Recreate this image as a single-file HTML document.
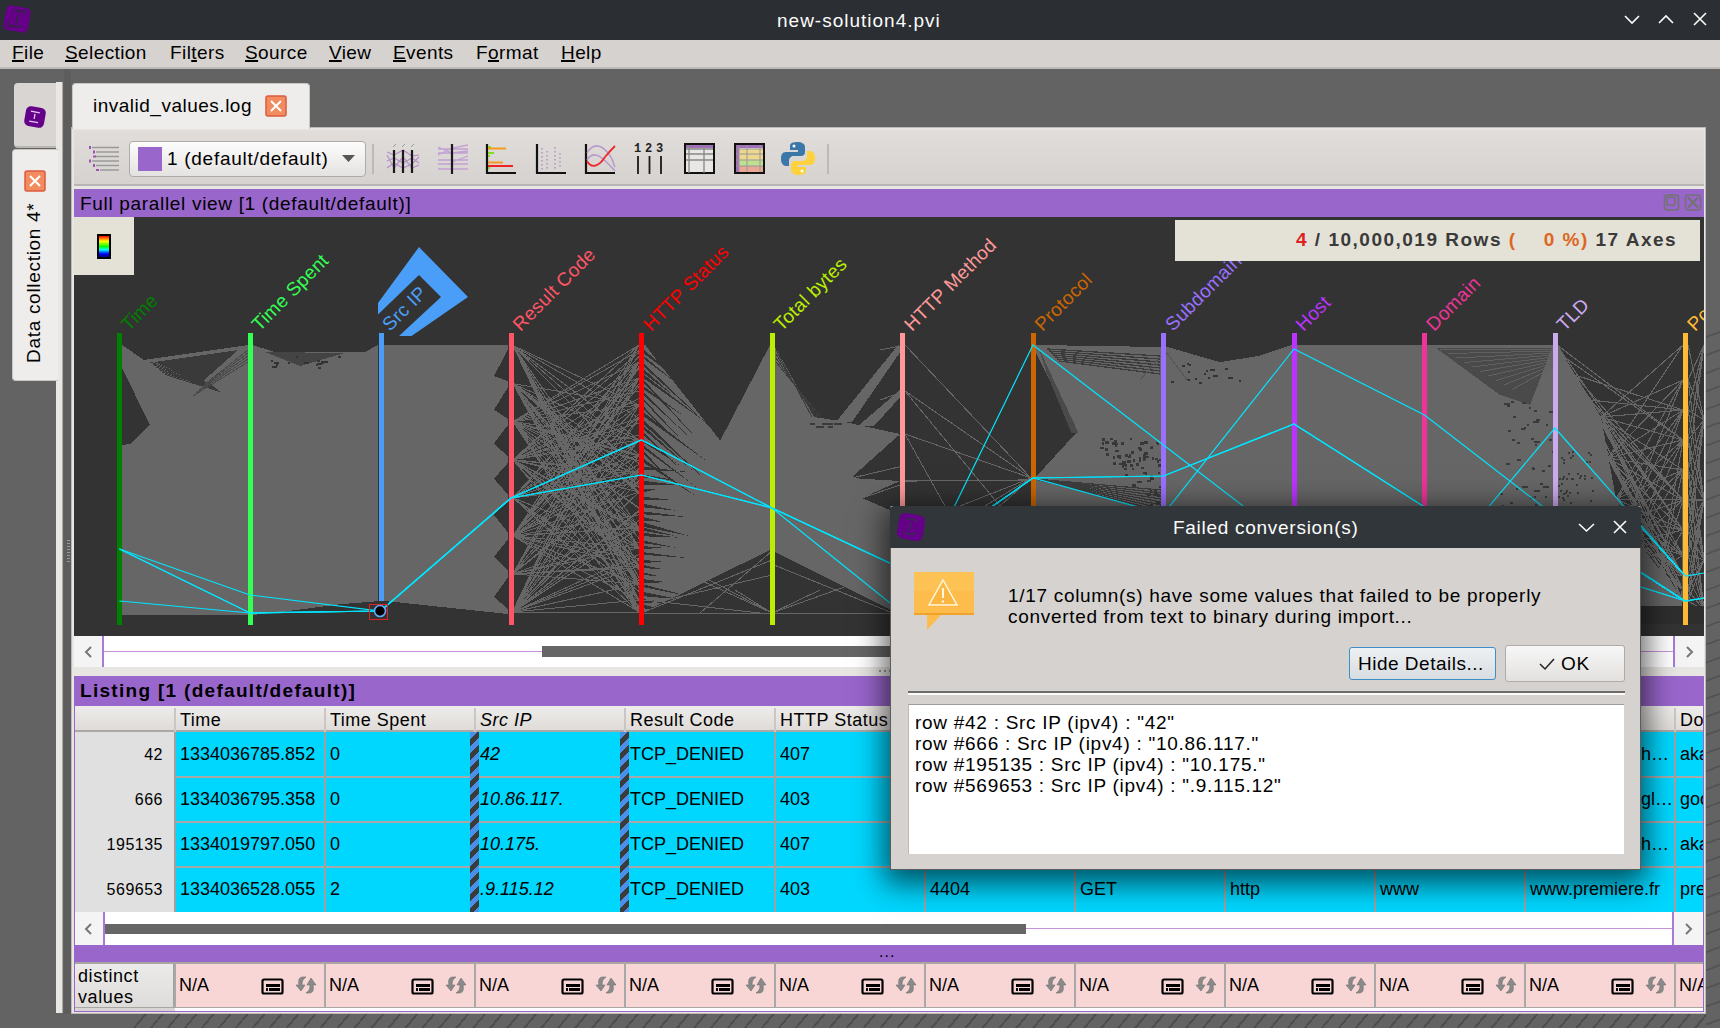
<!DOCTYPE html>
<html><head><meta charset="utf-8">
<style>
*{margin:0;padding:0;box-sizing:border-box}
html,body{width:1720px;height:1028px;overflow:hidden;background:#636363;font-family:"Liberation Sans",sans-serif;color:#000}
.a{position:absolute}
.t{position:absolute;white-space:pre;line-height:1}
#title{left:0;top:0;width:1720px;height:40px;background:#2b2e32;color:#fcfcfc;font-size:19px}
#menu{left:0;top:40px;width:1720px;height:29px;background:#d6d2cf;border-bottom:2px solid #bebab7;font-size:19px;letter-spacing:0.4px}
#menu span{position:absolute;top:2px}
u{text-decoration:underline;text-decoration-thickness:2px;text-underline-offset:1px}
.purple{background:#9966cc}
.hatch{background-color:#636363;background-image:repeating-linear-gradient(125deg,transparent 0 12px,#4a4a4a 12px 13.5px),repeating-linear-gradient(55deg,transparent 0 17px,#565656 17px 18.5px)}
.sep{position:absolute;width:2px;background:#bdb9b6}
</style></head><body>
<!-- bottom & right hatch -->
<div class="a" style="left:130px;top:1014px;width:1590px;height:14px;background-color:#636363;background-image:repeating-linear-gradient(130deg,transparent 0 11px,#4e4e4e 11px 13px)"></div>
<div class="a" style="left:1706px;top:320px;width:14px;height:708px;background-color:#636363;background-image:repeating-linear-gradient(160deg,transparent 0 15px,#545454 15px 17px)"></div>

<!-- title bar -->
<div id="title" class="a">
  <svg class="a" style="left:0;top:0" width="40" height="40" viewBox="0 0 40 40">
    <g transform="rotate(10 17 19)"><rect x="4.5" y="6.5" width="25" height="25" rx="5" fill="#660088"/></g>
    <path d="M14.5 10.5 L24.5 11.8 L25 14 M17.5 15.5 L16.3 22.5 M8.5 21.5 L8 25.5 L20.5 26.8" stroke="#2a2a3a" stroke-width="1.6" fill="none" stroke-linecap="round"/>
  </svg>
  <div class="t" style="left:777px;top:11px;letter-spacing:1px">new-solution4.pvi</div>
  <svg class="a" style="left:1620px;top:10px" width="100" height="20" viewBox="0 0 100 20">
    <path d="M5 6 L12 13 L19 6" stroke="#fcfcfc" stroke-width="1.6" fill="none"/>
    <path d="M39 13 L46 6 L53 13" stroke="#fcfcfc" stroke-width="1.6" fill="none"/>
    <path d="M74 3 L86 15 M86 3 L74 15" stroke="#fcfcfc" stroke-width="1.6" fill="none"/>
  </svg>
</div>

<!-- menu -->
<div id="menu" class="a">
  <span style="left:12px"><u>F</u>ile</span>
  <span style="left:65px"><u>S</u>election</span>
  <span style="left:170px">Fil<u>t</u>ers</span>
  <span style="left:245px"><u>S</u>ource</span>
  <span style="left:329px"><u>V</u>iew</span>
  <span style="left:393px"><u>E</u>vents</span>
  <span style="left:476px">F<u>o</u>rmat</span>
  <span style="left:561px"><u>H</u>elp</span>
</div>

<!-- left dock -->
<div class="a" style="left:56px;top:82px;width:7px;height:931px;background:#e9e7e4;border-right:1px solid #a9a6a3"></div>
<div class="a" style="left:64px;top:69px;width:7px;height:945px;background:#5d5d5d"></div>
<div class="a" style="left:14px;top:83px;width:42px;height:65px;background:#d8d5d2;border-radius:4px 0 0 4px;border-bottom:2px solid #b9b6b3"></div>
<svg class="a" style="left:21px;top:103px" width="28" height="28" viewBox="0 0 28 28">
  <g transform="rotate(10 14 14)"><rect x="4" y="4" width="20" height="20" rx="5" fill="#650088"/>
  <path d="M9 9 h9 M13.5 11 v5 M9 19 h9" stroke="#e8c8ff" stroke-width="1.3" fill="none"/></g>
</svg>
<div class="a" style="left:12px;top:149px;width:46px;height:232px;background:#efedeb;border-radius:4px 0 0 4px;border:1px solid #c9c6c3;border-right:none"></div>
<svg class="a" style="left:24px;top:170px" width="22" height="22" viewBox="0 0 22 22">
  <rect x="1" y="1" width="20" height="20" rx="2" fill="#f28c60" stroke="#db5a3c" stroke-width="1.5"/>
  <path d="M6 6 L16 16 M16 6 L6 16" stroke="#fff" stroke-width="2"/>
</svg>
<div class="t" style="left:24px;top:363px;font-size:19px;letter-spacing:0.7px;transform:rotate(-90deg);transform-origin:0 0">Data collection 4*</div>
<div class="a" style="left:67px;top:540px;width:3px;height:24px;background:repeating-linear-gradient(#9a9a9a 0 1px,transparent 1px 3px)"></div>

<!-- main tab -->
<div class="a" style="left:71px;top:127px;width:1635px;height:887px;background:#e8e6e3;border:1px solid #bcb9b6"></div>
<div class="a" style="left:72px;top:83px;width:238px;height:46px;background:#efedeb;border-radius:4px 4px 0 0;border:1px solid #c9c6c3;border-bottom:none"></div>
<div class="t" style="left:93px;top:96px;font-size:19px;letter-spacing:0.5px">invalid_values.log</div>
<svg class="a" style="left:265px;top:95px" width="22" height="22" viewBox="0 0 22 22">
  <rect x="1" y="1" width="20" height="20" rx="2" fill="#f28c60" stroke="#db5a3c" stroke-width="1.5"/>
  <path d="M6 6 L16 16 M16 6 L6 16" stroke="#fff" stroke-width="2"/>
</svg>

<!-- toolbar -->
<div class="a" style="left:74px;top:130px;width:1630px;height:56px;background:linear-gradient(#e0ddda,#d6d2cf);border-bottom:2px solid #b8b5b2"></div>
<!-- list icon -->
<svg class="a" style="left:88px;top:145px" width="32" height="29" viewBox="0 0 32 29">
  <g stroke="#9a9a9a" stroke-width="1.6">
    <path d="M4 2.5 H31 M8 7 H31 M8 11.5 H31 M4 16 H31 M8 20.5 H31 M12 25 H31"/>
  </g>
  <g fill="#a050b0">
    <rect x="1" y="1" width="2" height="3"/><rect x="5" y="5.5" width="2" height="3"/><rect x="5" y="10.5" width="3" height="2"/>
    <rect x="1" y="14.5" width="2" height="3"/><rect x="5" y="19" width="2" height="3"/><rect x="8" y="24" width="3" height="2"/>
  </g>
</svg>
<!-- combo -->
<div class="a" style="left:129px;top:141px;width:237px;height:36px;border:1px solid #aeaba8;border-radius:4px;background:linear-gradient(#fdfdfd,#e4e2e0)"></div>
<div class="a" style="left:138px;top:147px;width:24px;height:24px;background:#9966cc"></div>
<div class="t" style="left:167px;top:149px;font-size:19px;letter-spacing:0.72px">1 (default/default)</div>
<svg class="a" style="left:341px;top:154px" width="15" height="10"><path d="M1 1 H14 L7.5 8 Z" fill="#555"/></svg>
<div class="sep" style="left:372px;top:144px;height:30px"></div>
<!-- icon 1 parallel -->
<svg class="a" style="left:386px;top:143px" width="34" height="32" viewBox="0 0 34 32">
  <g stroke="#b48ac8" stroke-width="1.2" fill="none" opacity="0.9">
    <path d="M1 9 L8 12 L17 7 L26 13 L33 12"/><path d="M1 18 L8 15 L17 20 L26 15 L33 20"/>
    <path d="M1 25 L8 20 L17 25 L26 21 L33 14"/><path d="M1 12 L8 25 L17 14 L26 25 L33 22"/>
  </g>
  <path d="M8 7 V30 M17 7 V30 M26 7 V30" stroke="#1a1a1a" stroke-width="2.2"/>
  <path d="M7 4 L10 1 M16 4 L19 1 M25 4 L28 1" stroke="#999" stroke-width="1"/>
</svg>
<!-- icon 2 zoomed parallel -->
<svg class="a" style="left:437px;top:143px" width="32" height="32" viewBox="0 0 32 32">
  <g stroke="#c4a0d4" stroke-width="1.3" fill="none">
    <path d="M1 6 H31 M1 10 H31 M1 17 H31 M1 21 H31 M1 26 H31 M1 12 L15 5 L31 2 M1 4 L15 10 L31 8 M15 19 L31 13"/>
  </g>
  <path d="M15 1 V31" stroke="#1a1a1a" stroke-width="2.2"/>
</svg>
<!-- icon 3 histogram -->
<svg class="a" style="left:485px;top:143px" width="32" height="32" viewBox="0 0 32 32">
  <path d="M2 1 V30 H31" stroke="#111" stroke-width="2.2" fill="none"/>
  <path d="M3 4 H6 M3 10 H9 M3 13 H5 M3 25 H5" stroke="#7de020" stroke-width="1.8"/>
  <path d="M3 5.5 H21 M3 19.5 H18" stroke="#f79a22" stroke-width="1.8"/>
  <path d="M3 23 H28" stroke="#ee2222" stroke-width="2"/>
</svg>
<!-- icon 4 scatter -->
<svg class="a" style="left:535px;top:143px" width="32" height="32" viewBox="0 0 32 32">
  <path d="M2 1 V30 H31" stroke="#111" stroke-width="2.2" fill="none"/>
  <g stroke="#b48ac8" stroke-width="1.4" stroke-dasharray="1.5 2.5"><path d="M7 5 V27 M12 8 V26 M20 4 V26 M25 10 V26"/></g>
</svg>
<!-- icon 5 curves -->
<svg class="a" style="left:584px;top:143px" width="32" height="32" viewBox="0 0 32 32">
  <path d="M2 1 V30 H31" stroke="#111" stroke-width="2.2" fill="none"/>
  <g stroke="#b89acc" stroke-width="1.5" fill="none"><path d="M3 10 C10 -2 20 2 28 16 C30 22 31 24 31 24"/><path d="M3 17 C10 5 20 16 31 28"/></g>
  <path d="M3 18 C8 27 16 22 21 14 C25 9 28 6 31 3" stroke="#ee2b2b" stroke-width="1.8" fill="none"/>
</svg>
<!-- icon 6 123 -->
<svg class="a" style="left:634px;top:141px" width="32" height="34" viewBox="0 0 32 34">
  <text x="0" y="11" font-family="Liberation Mono" font-weight="bold" font-size="12" fill="#222">1</text>
  <text x="11" y="11" font-family="Liberation Mono" font-weight="bold" font-size="12" fill="#222">2</text>
  <text x="22" y="11" font-family="Liberation Mono" font-weight="bold" font-size="12" fill="#222">3</text>
  <path d="M4 15 V33 M15.5 15 V33 M27 15 V33" stroke="#1a1a1a" stroke-width="1.8"/>
</svg>
<!-- icon 7 table -->
<svg class="a" style="left:684px;top:143px" width="31" height="32" viewBox="0 0 31 32">
  <rect x="1" y="1" width="29" height="29" fill="#e9e7e5" stroke="#111" stroke-width="2"/>
  <rect x="2" y="2" width="27" height="3" fill="#a070b8"/>
  <path d="M5 2 V30 M20 2 V30 M2 6 H29 M2 11 H29 M2 17 H29" stroke="#888" stroke-width="1.3"/>
</svg>
<!-- icon 8 colored table -->
<svg class="a" style="left:734px;top:143px" width="31" height="32" viewBox="0 0 31 32">
  <rect x="1" y="1" width="29" height="29" fill="#e9e7e5" stroke="#111" stroke-width="2"/>
  <rect x="2" y="2" width="27" height="3" fill="#a070b8"/>
  <rect x="2" y="5" width="3" height="25" fill="#a070b8"/>
  <rect x="5" y="6" width="24" height="11" fill="#ecd98f"/>
  <rect x="5" y="17" width="24" height="6" fill="#bfe08f"/>
  <rect x="5" y="23" width="24" height="7" fill="#eba896"/>
  <path d="M5 2 V30 M13 2 V30 M26 2 V30 M2 6 H29 M2 11 H29 M2 17 H29 M2 23 H29" stroke="#999" stroke-width="1"/>
  <rect x="1" y="1" width="29" height="29" fill="none" stroke="#111" stroke-width="2"/>
</svg>
<!-- icon 9 python -->
<svg class="a" style="left:781px;top:141px" width="34" height="35" viewBox="0 0 34 35">
  <path d="M16 1 C9 1 9 4 9 6 V9 H17 V11 H5 C1 11 0 14 0 18 C0 22 2 25 5 25 H8 V20 C8 17 10 15 13 15 H20 C23 15 24 13 24 11 V6 C24 3 21 1 16 1 Z" fill="#3b77a8"/>
  <path d="M18 34 C25 34 25 31 25 29 V26 H17 V24 H29 C33 24 34 21 34 17 C34 13 32 10 29 10 H26 V15 C26 18 24 20 21 20 H14 C11 20 10 22 10 24 V29 C10 32 13 34 18 34 Z" fill="#fdd23c"/>
  <circle cx="13" cy="5" r="1.5" fill="#fff"/><circle cx="21" cy="30" r="1.5" fill="#fff"/>
</svg>
<div class="sep" style="left:827px;top:144px;height:30px"></div>


<!-- parallel view dock -->
<div class="a purple" style="left:74px;top:189px;width:1630px;height:28px"></div>
<div class="t" style="left:80px;top:194px;font-size:19px;letter-spacing:0.68px">Full parallel view [1 (default/default)]</div>
<svg class="a" style="left:1662px;top:192px" width="42" height="22" viewBox="0 0 42 22">
  <g stroke="#727272" fill="none" stroke-width="1.5"><rect x="2.5" y="3" width="14" height="15" rx="2.5"/><rect x="4.8" y="5.2" width="8" height="8" rx="1"/><rect x="23.5" y="3" width="15" height="15" rx="2.5"/><path d="M26 5.5 L36 15.5 M36 5.5 L26 15.5" stroke-width="2.2"/></g>
</svg>
<div class="a" style="left:74px;top:217px;width:1630px;height:419px;background:#333333;overflow:hidden">
<svg width="1630" height="419" viewBox="74 217 1630 419" style="position:absolute;left:0;top:0" shape-rendering="crispEdges">
<polygon points="122.0,345.0 144.0,360.0 248.0,345.0 248.0,615.0 122.0,615.0" fill="#666666"/>
<polygon points="154.0,362.0 238.0,350.0 202.0,382.0" fill="#3a3a3a"/>
<polygon points="122.0,368.0 150.0,425.0 130.0,444.0 122.0,445.0" fill="#333"/>
<line x1="150.0" y1="362.0" x2="210.0" y2="384.0" stroke="#3a3a3a" stroke-width="1"/>
<line x1="153.0" y1="364.5" x2="212.0" y2="385.5" stroke="#3a3a3a" stroke-width="1"/>
<line x1="156.0" y1="367.0" x2="214.0" y2="387.0" stroke="#3a3a3a" stroke-width="1"/>
<line x1="159.0" y1="369.5" x2="216.0" y2="388.5" stroke="#3a3a3a" stroke-width="1"/>
<line x1="162.0" y1="372.0" x2="218.0" y2="390.0" stroke="#3a3a3a" stroke-width="1"/>
<line x1="165.0" y1="374.5" x2="220.0" y2="391.5" stroke="#3a3a3a" stroke-width="1"/>
<line x1="248.0" y1="350.0" x2="205.0" y2="384.0" stroke="#4a4a4a" stroke-width="1"/>
<line x1="248.0" y1="353.0" x2="202.0" y2="387.0" stroke="#4a4a4a" stroke-width="1"/>
<line x1="248.0" y1="356.0" x2="199.0" y2="390.0" stroke="#4a4a4a" stroke-width="1"/>
<line x1="248.0" y1="359.0" x2="196.0" y2="393.0" stroke="#4a4a4a" stroke-width="1"/>
<line x1="248.0" y1="362.0" x2="193.0" y2="396.0" stroke="#4a4a4a" stroke-width="1"/>
<polygon points="252.0,345.0 275.0,352.0 365.0,352.0 378.0,345.0 378.0,601.0 369.0,602.0 342.0,604.0 281.0,612.0 252.0,615.0" fill="#666666"/>
<polygon points="265.0,352.0 345.0,353.0 300.0,366.0" fill="#444"/>
<rect x="296" y="356" width="2" height="2" fill="#333"/>
<rect x="274" y="362" width="5" height="2" fill="#333"/>
<rect x="318" y="367" width="3" height="2" fill="#333"/>
<rect x="271" y="360" width="2" height="2" fill="#333"/>
<rect x="288" y="362" width="2" height="2" fill="#333"/>
<rect x="338" y="356" width="3" height="2" fill="#333"/>
<rect x="322" y="362" width="2" height="2" fill="#333"/>
<rect x="317" y="360" width="3" height="2" fill="#333"/>
<rect x="272" y="366" width="5" height="2" fill="#333"/>
<rect x="304" y="362" width="5" height="2" fill="#333"/>
<rect x="316" y="364" width="2" height="2" fill="#333"/>
<rect x="317" y="363" width="5" height="2" fill="#333"/>
<rect x="276" y="364" width="2" height="2" fill="#333"/>
<rect x="321" y="361" width="7" height="2" fill="#333"/>
<polygon points="383.0,345.0 508.0,345.0 508.0,614.0 395.0,602.0 383.0,601.0" fill="#666666"/>
<polygon points="509.0,347.5 494.0,376.0 509.0,381.6" fill="#333"/>
<polygon points="509.0,385.6 494.0,409.8 509.0,419.6" fill="#333"/>
<polygon points="509.0,423.6 494.0,443.3 509.0,457.7" fill="#333"/>
<polygon points="509.0,461.7 494.0,478.7 509.0,495.8" fill="#333"/>
<polygon points="509.0,499.8 494.0,514.9 509.0,533.9" fill="#333"/>
<polygon points="509.0,537.9 494.0,556.8 509.0,571.9" fill="#333"/>
<polygon points="509.0,575.9 494.0,596.8 509.0,610.0" fill="#333"/>
<line x1="513.0" y1="345.5" x2="639.0" y2="405.0" stroke="#666666" stroke-width="1"/>
<line x1="513.0" y1="345.5" x2="639.0" y2="418.0" stroke="#666666" stroke-width="1"/>
<line x1="513.0" y1="345.5" x2="639.0" y2="440.0" stroke="#666666" stroke-width="1"/>
<line x1="513.0" y1="345.5" x2="639.0" y2="455.0" stroke="#666666" stroke-width="1"/>
<line x1="513.0" y1="345.5" x2="639.0" y2="528.0" stroke="#666666" stroke-width="1"/>
<line x1="513.0" y1="345.5" x2="639.0" y2="566.0" stroke="#666666" stroke-width="1"/>
<line x1="513.0" y1="345.5" x2="639.0" y2="584.0" stroke="#666666" stroke-width="1"/>
<line x1="513.0" y1="345.5" x2="639.0" y2="600.0" stroke="#666666" stroke-width="1"/>
<line x1="513.0" y1="345.5" x2="639.0" y2="612.0" stroke="#666666" stroke-width="1"/>
<line x1="513.0" y1="383.6" x2="639.0" y2="405.0" stroke="#666666" stroke-width="1"/>
<line x1="513.0" y1="383.6" x2="639.0" y2="440.0" stroke="#666666" stroke-width="1"/>
<line x1="513.0" y1="383.6" x2="639.0" y2="475.0" stroke="#666666" stroke-width="1"/>
<line x1="513.0" y1="383.6" x2="639.0" y2="492.0" stroke="#666666" stroke-width="1"/>
<line x1="513.0" y1="383.6" x2="639.0" y2="528.0" stroke="#666666" stroke-width="1"/>
<line x1="513.0" y1="383.6" x2="639.0" y2="548.0" stroke="#666666" stroke-width="1"/>
<line x1="513.0" y1="383.6" x2="639.0" y2="584.0" stroke="#666666" stroke-width="1"/>
<line x1="513.0" y1="383.6" x2="639.0" y2="600.0" stroke="#666666" stroke-width="1"/>
<line x1="513.0" y1="383.6" x2="639.0" y2="612.0" stroke="#666666" stroke-width="1"/>
<line x1="513.0" y1="421.6" x2="639.0" y2="345.0" stroke="#666666" stroke-width="1"/>
<line x1="513.0" y1="421.6" x2="639.0" y2="362.0" stroke="#666666" stroke-width="1"/>
<line x1="513.0" y1="421.6" x2="639.0" y2="378.0" stroke="#666666" stroke-width="1"/>
<line x1="513.0" y1="421.6" x2="639.0" y2="405.0" stroke="#666666" stroke-width="1"/>
<line x1="513.0" y1="421.6" x2="639.0" y2="455.0" stroke="#666666" stroke-width="1"/>
<line x1="513.0" y1="421.6" x2="639.0" y2="475.0" stroke="#666666" stroke-width="1"/>
<line x1="513.0" y1="421.6" x2="639.0" y2="528.0" stroke="#666666" stroke-width="1"/>
<line x1="513.0" y1="421.6" x2="639.0" y2="548.0" stroke="#666666" stroke-width="1"/>
<line x1="513.0" y1="421.6" x2="639.0" y2="566.0" stroke="#666666" stroke-width="1"/>
<line x1="513.0" y1="421.6" x2="639.0" y2="584.0" stroke="#666666" stroke-width="1"/>
<line x1="513.0" y1="421.6" x2="639.0" y2="600.0" stroke="#666666" stroke-width="1"/>
<line x1="513.0" y1="421.6" x2="639.0" y2="612.0" stroke="#666666" stroke-width="1"/>
<line x1="513.0" y1="459.7" x2="639.0" y2="345.0" stroke="#666666" stroke-width="1"/>
<line x1="513.0" y1="459.7" x2="639.0" y2="362.0" stroke="#666666" stroke-width="1"/>
<line x1="513.0" y1="459.7" x2="639.0" y2="378.0" stroke="#666666" stroke-width="1"/>
<line x1="513.0" y1="459.7" x2="639.0" y2="405.0" stroke="#666666" stroke-width="1"/>
<line x1="513.0" y1="459.7" x2="639.0" y2="418.0" stroke="#666666" stroke-width="1"/>
<line x1="513.0" y1="459.7" x2="639.0" y2="440.0" stroke="#666666" stroke-width="1"/>
<line x1="513.0" y1="459.7" x2="639.0" y2="475.0" stroke="#666666" stroke-width="1"/>
<line x1="513.0" y1="459.7" x2="639.0" y2="492.0" stroke="#666666" stroke-width="1"/>
<line x1="513.0" y1="459.7" x2="639.0" y2="528.0" stroke="#666666" stroke-width="1"/>
<line x1="513.0" y1="459.7" x2="639.0" y2="548.0" stroke="#666666" stroke-width="1"/>
<line x1="513.0" y1="459.7" x2="639.0" y2="566.0" stroke="#666666" stroke-width="1"/>
<line x1="513.0" y1="459.7" x2="639.0" y2="600.0" stroke="#666666" stroke-width="1"/>
<line x1="513.0" y1="459.7" x2="639.0" y2="612.0" stroke="#666666" stroke-width="1"/>
<line x1="513.0" y1="497.8" x2="639.0" y2="362.0" stroke="#666666" stroke-width="1"/>
<line x1="513.0" y1="497.8" x2="639.0" y2="378.0" stroke="#666666" stroke-width="1"/>
<line x1="513.0" y1="497.8" x2="639.0" y2="405.0" stroke="#666666" stroke-width="1"/>
<line x1="513.0" y1="497.8" x2="639.0" y2="418.0" stroke="#666666" stroke-width="1"/>
<line x1="513.0" y1="497.8" x2="639.0" y2="440.0" stroke="#666666" stroke-width="1"/>
<line x1="513.0" y1="497.8" x2="639.0" y2="455.0" stroke="#666666" stroke-width="1"/>
<line x1="513.0" y1="497.8" x2="639.0" y2="548.0" stroke="#666666" stroke-width="1"/>
<line x1="513.0" y1="497.8" x2="639.0" y2="584.0" stroke="#666666" stroke-width="1"/>
<line x1="513.0" y1="497.8" x2="639.0" y2="612.0" stroke="#666666" stroke-width="1"/>
<line x1="513.0" y1="535.9" x2="639.0" y2="362.0" stroke="#666666" stroke-width="1"/>
<line x1="513.0" y1="535.9" x2="639.0" y2="378.0" stroke="#666666" stroke-width="1"/>
<line x1="513.0" y1="535.9" x2="639.0" y2="405.0" stroke="#666666" stroke-width="1"/>
<line x1="513.0" y1="535.9" x2="639.0" y2="440.0" stroke="#666666" stroke-width="1"/>
<line x1="513.0" y1="535.9" x2="639.0" y2="455.0" stroke="#666666" stroke-width="1"/>
<line x1="513.0" y1="535.9" x2="639.0" y2="475.0" stroke="#666666" stroke-width="1"/>
<line x1="513.0" y1="535.9" x2="639.0" y2="492.0" stroke="#666666" stroke-width="1"/>
<line x1="513.0" y1="535.9" x2="639.0" y2="528.0" stroke="#666666" stroke-width="1"/>
<line x1="513.0" y1="535.9" x2="639.0" y2="548.0" stroke="#666666" stroke-width="1"/>
<line x1="513.0" y1="535.9" x2="639.0" y2="566.0" stroke="#666666" stroke-width="1"/>
<line x1="513.0" y1="535.9" x2="639.0" y2="584.0" stroke="#666666" stroke-width="1"/>
<line x1="513.0" y1="535.9" x2="639.0" y2="600.0" stroke="#666666" stroke-width="1"/>
<line x1="513.0" y1="535.9" x2="639.0" y2="612.0" stroke="#666666" stroke-width="1"/>
<line x1="513.0" y1="573.9" x2="639.0" y2="345.0" stroke="#666666" stroke-width="1"/>
<line x1="513.0" y1="573.9" x2="639.0" y2="362.0" stroke="#666666" stroke-width="1"/>
<line x1="513.0" y1="573.9" x2="639.0" y2="378.0" stroke="#666666" stroke-width="1"/>
<line x1="513.0" y1="573.9" x2="639.0" y2="418.0" stroke="#666666" stroke-width="1"/>
<line x1="513.0" y1="573.9" x2="639.0" y2="440.0" stroke="#666666" stroke-width="1"/>
<line x1="513.0" y1="573.9" x2="639.0" y2="475.0" stroke="#666666" stroke-width="1"/>
<line x1="513.0" y1="573.9" x2="639.0" y2="528.0" stroke="#666666" stroke-width="1"/>
<line x1="513.0" y1="573.9" x2="639.0" y2="548.0" stroke="#666666" stroke-width="1"/>
<line x1="513.0" y1="573.9" x2="639.0" y2="566.0" stroke="#666666" stroke-width="1"/>
<line x1="513.0" y1="573.9" x2="639.0" y2="584.0" stroke="#666666" stroke-width="1"/>
<line x1="513.0" y1="612.0" x2="639.0" y2="345.0" stroke="#666666" stroke-width="1"/>
<line x1="513.0" y1="612.0" x2="639.0" y2="362.0" stroke="#666666" stroke-width="1"/>
<line x1="513.0" y1="612.0" x2="639.0" y2="378.0" stroke="#666666" stroke-width="1"/>
<line x1="513.0" y1="612.0" x2="639.0" y2="405.0" stroke="#666666" stroke-width="1"/>
<line x1="513.0" y1="612.0" x2="639.0" y2="418.0" stroke="#666666" stroke-width="1"/>
<line x1="513.0" y1="612.0" x2="639.0" y2="455.0" stroke="#666666" stroke-width="1"/>
<line x1="513.0" y1="612.0" x2="639.0" y2="475.0" stroke="#666666" stroke-width="1"/>
<line x1="513.0" y1="612.0" x2="639.0" y2="492.0" stroke="#666666" stroke-width="1"/>
<line x1="513.0" y1="612.0" x2="639.0" y2="528.0" stroke="#666666" stroke-width="1"/>
<line x1="513.0" y1="612.0" x2="639.0" y2="566.0" stroke="#666666" stroke-width="1"/>
<line x1="513.0" y1="612.0" x2="639.0" y2="584.0" stroke="#666666" stroke-width="1"/>
<line x1="513.0" y1="612.0" x2="639.0" y2="600.0" stroke="#666666" stroke-width="1"/>
<line x1="513.0" y1="612.0" x2="639.0" y2="612.0" stroke="#666666" stroke-width="1"/>
<line x1="513.0" y1="460.0" x2="639.0" y2="345.0" stroke="#666666" stroke-width="1"/>
<line x1="513.0" y1="536.0" x2="639.0" y2="345.0" stroke="#666666" stroke-width="1"/>
<line x1="513.0" y1="611.0" x2="639.0" y2="345.0" stroke="#666666" stroke-width="1"/>
<line x1="513.0" y1="460.0" x2="639.0" y2="362.0" stroke="#666666" stroke-width="1"/>
<line x1="513.0" y1="536.0" x2="639.0" y2="362.0" stroke="#666666" stroke-width="1"/>
<line x1="513.0" y1="611.0" x2="639.0" y2="362.0" stroke="#666666" stroke-width="1"/>
<line x1="513.0" y1="535.9" x2="639.0" y2="384.1" stroke="#666666" stroke-width="1"/>
<line x1="513.0" y1="345.5" x2="639.0" y2="547.4" stroke="#666666" stroke-width="1"/>
<line x1="513.0" y1="497.8" x2="639.0" y2="606.3" stroke="#666666" stroke-width="1"/>
<line x1="513.0" y1="383.6" x2="639.0" y2="530.9" stroke="#666666" stroke-width="1"/>
<line x1="513.0" y1="497.8" x2="639.0" y2="483.4" stroke="#666666" stroke-width="1"/>
<line x1="513.0" y1="421.6" x2="639.0" y2="440.0" stroke="#666666" stroke-width="1"/>
<line x1="513.0" y1="459.7" x2="639.0" y2="487.2" stroke="#666666" stroke-width="1"/>
<line x1="513.0" y1="535.9" x2="639.0" y2="514.9" stroke="#666666" stroke-width="1"/>
<line x1="513.0" y1="459.7" x2="639.0" y2="560.2" stroke="#666666" stroke-width="1"/>
<line x1="513.0" y1="573.9" x2="639.0" y2="542.5" stroke="#666666" stroke-width="1"/>
<line x1="513.0" y1="459.7" x2="639.0" y2="398.4" stroke="#666666" stroke-width="1"/>
<line x1="513.0" y1="612.0" x2="639.0" y2="439.9" stroke="#666666" stroke-width="1"/>
<line x1="513.0" y1="345.5" x2="639.0" y2="609.2" stroke="#666666" stroke-width="1"/>
<line x1="513.0" y1="497.8" x2="639.0" y2="471.1" stroke="#666666" stroke-width="1"/>
<line x1="513.0" y1="459.7" x2="639.0" y2="529.9" stroke="#666666" stroke-width="1"/>
<line x1="513.0" y1="535.9" x2="639.0" y2="464.4" stroke="#666666" stroke-width="1"/>
<line x1="513.0" y1="535.9" x2="639.0" y2="600.0" stroke="#666666" stroke-width="1"/>
<line x1="513.0" y1="535.9" x2="639.0" y2="366.5" stroke="#666666" stroke-width="1"/>
<line x1="513.0" y1="459.7" x2="639.0" y2="435.2" stroke="#666666" stroke-width="1"/>
<line x1="513.0" y1="612.0" x2="639.0" y2="511.6" stroke="#666666" stroke-width="1"/>
<line x1="513.0" y1="345.5" x2="639.0" y2="473.0" stroke="#666666" stroke-width="1"/>
<line x1="513.0" y1="535.9" x2="639.0" y2="558.5" stroke="#666666" stroke-width="1"/>
<line x1="513.0" y1="383.6" x2="639.0" y2="567.9" stroke="#666666" stroke-width="1"/>
<line x1="513.0" y1="383.6" x2="639.0" y2="587.9" stroke="#666666" stroke-width="1"/>
<line x1="513.0" y1="459.7" x2="639.0" y2="472.6" stroke="#666666" stroke-width="1"/>
<line x1="513.0" y1="421.6" x2="639.0" y2="460.9" stroke="#666666" stroke-width="1"/>
<line x1="513.0" y1="535.9" x2="639.0" y2="368.2" stroke="#666666" stroke-width="1"/>
<line x1="513.0" y1="573.9" x2="639.0" y2="468.7" stroke="#666666" stroke-width="1"/>
<line x1="513.0" y1="383.6" x2="639.0" y2="538.5" stroke="#666666" stroke-width="1"/>
<line x1="513.0" y1="421.6" x2="639.0" y2="610.2" stroke="#666666" stroke-width="1"/>
<line x1="513.0" y1="612.0" x2="639.0" y2="560.3" stroke="#666666" stroke-width="1"/>
<line x1="513.0" y1="421.6" x2="639.0" y2="508.3" stroke="#666666" stroke-width="1"/>
<line x1="513.0" y1="612.0" x2="639.0" y2="520.5" stroke="#666666" stroke-width="1"/>
<line x1="513.0" y1="535.9" x2="639.0" y2="386.6" stroke="#666666" stroke-width="1"/>
<line x1="513.0" y1="421.6" x2="639.0" y2="350.7" stroke="#666666" stroke-width="1"/>
<line x1="513.0" y1="383.6" x2="639.0" y2="485.6" stroke="#666666" stroke-width="1"/>
<line x1="513.0" y1="421.6" x2="639.0" y2="460.8" stroke="#666666" stroke-width="1"/>
<line x1="513.0" y1="459.7" x2="639.0" y2="565.6" stroke="#666666" stroke-width="1"/>
<line x1="513.0" y1="459.7" x2="639.0" y2="352.5" stroke="#666666" stroke-width="1"/>
<line x1="513.0" y1="459.7" x2="639.0" y2="423.2" stroke="#666666" stroke-width="1"/>
<line x1="513.0" y1="459.7" x2="639.0" y2="548.9" stroke="#666666" stroke-width="1"/>
<line x1="513.0" y1="535.9" x2="639.0" y2="414.3" stroke="#666666" stroke-width="1"/>
<line x1="513.0" y1="573.9" x2="639.0" y2="567.7" stroke="#666666" stroke-width="1"/>
<line x1="513.0" y1="345.5" x2="639.0" y2="588.0" stroke="#666666" stroke-width="1"/>
<line x1="513.0" y1="535.9" x2="639.0" y2="584.7" stroke="#666666" stroke-width="1"/>
<line x1="513.0" y1="573.9" x2="639.0" y2="565.8" stroke="#666666" stroke-width="1"/>
<line x1="513.0" y1="421.6" x2="639.0" y2="487.0" stroke="#666666" stroke-width="1"/>
<line x1="513.0" y1="345.5" x2="639.0" y2="578.0" stroke="#666666" stroke-width="1"/>
<line x1="513.0" y1="421.6" x2="639.0" y2="507.5" stroke="#666666" stroke-width="1"/>
<line x1="513.0" y1="421.6" x2="639.0" y2="391.0" stroke="#666666" stroke-width="1"/>
<line x1="513.0" y1="612.0" x2="639.0" y2="510.3" stroke="#666666" stroke-width="1"/>
<line x1="513.0" y1="383.6" x2="639.0" y2="493.6" stroke="#666666" stroke-width="1"/>
<line x1="513.0" y1="535.9" x2="639.0" y2="527.2" stroke="#666666" stroke-width="1"/>
<line x1="513.0" y1="612.0" x2="639.0" y2="554.4" stroke="#666666" stroke-width="1"/>
<line x1="513.0" y1="383.6" x2="639.0" y2="580.8" stroke="#666666" stroke-width="1"/>
<line x1="513.0" y1="497.8" x2="639.0" y2="356.3" stroke="#666666" stroke-width="1"/>
<line x1="513.0" y1="383.6" x2="639.0" y2="480.6" stroke="#666666" stroke-width="1"/>
<line x1="513.0" y1="345.5" x2="639.0" y2="547.9" stroke="#666666" stroke-width="1"/>
<line x1="513.0" y1="383.6" x2="639.0" y2="463.3" stroke="#666666" stroke-width="1"/>
<line x1="513.0" y1="459.7" x2="639.0" y2="530.0" stroke="#666666" stroke-width="1"/>
<line x1="513.0" y1="612.0" x2="639.0" y2="480.7" stroke="#666666" stroke-width="1"/>
<line x1="513.0" y1="612.0" x2="639.0" y2="480.6" stroke="#666666" stroke-width="1"/>
<line x1="513.0" y1="459.7" x2="639.0" y2="531.7" stroke="#666666" stroke-width="1"/>
<line x1="513.0" y1="497.8" x2="639.0" y2="591.4" stroke="#666666" stroke-width="1"/>
<line x1="513.0" y1="459.7" x2="639.0" y2="569.3" stroke="#666666" stroke-width="1"/>
<line x1="513.0" y1="421.6" x2="639.0" y2="456.2" stroke="#666666" stroke-width="1"/>
<polygon points="644.0,345.0 720.0,441.0 770.0,345.0 770.0,550.0 644.0,612.0" fill="#666666"/>
<line x1="644.0" y1="345.0" x2="720.0" y2="441.0" stroke="#666666" stroke-width="1"/>
<line x1="644.0" y1="362.0" x2="720.0" y2="441.0" stroke="#666666" stroke-width="1"/>
<line x1="644.0" y1="378.0" x2="720.0" y2="441.0" stroke="#666666" stroke-width="1"/>












<line x1="644.0" y1="345.0" x2="722.0" y2="449.0" stroke="#666" stroke-width="2"/>
<polygon points="644.0,350.0 686.7,385.3 644.0,353.8" fill="#333"/>
<polygon points="644.0,356.3 678.6,384.7 644.0,359.0" fill="#333"/>
<polygon points="644.0,363.6 711.3,428.0 644.0,366.8" fill="#333"/>
<polygon points="644.0,369.4 675.2,397.0 644.0,373.4" fill="#333"/>
<polygon points="644.0,374.7 708.8,424.3 644.0,378.5" fill="#333"/>
<polygon points="644.0,380.3 700.8,442.7 644.0,383.6" fill="#333"/>
<polygon points="644.0,386.6 685.0,416.8 644.0,389.8" fill="#333"/>
<polygon points="644.0,392.6 689.6,437.4 644.0,395.9" fill="#333"/>
<polygon points="644.0,399.2 682.3,440.7 644.0,401.9" fill="#333"/>
<polygon points="644.0,406.9 679.3,444.0 644.0,409.6" fill="#333"/>
<polygon points="644.0,412.7 709.8,463.5 644.0,416.7" fill="#333"/>
<polygon points="644.0,420.2 707.2,481.5 644.0,424.6" fill="#333"/>
<polygon points="644.0,426.4 693.1,470.9 644.0,429.9" fill="#333"/>
<polygon points="644.0,432.4 681.6,470.7 644.0,435.3" fill="#333"/>
<polygon points="644.0,440.1 681.1,466.3 644.0,442.8" fill="#333"/>
<polygon points="644.0,445.9 696.4,487.2 644.0,448.9" fill="#333"/>
<polygon points="644.0,451.2 669.5,479.2 644.0,454.6" fill="#333"/>
<polygon points="644.0,459.0 697.0,497.0 644.0,462.9" fill="#333"/>
<polygon points="644.0,466.8 687.9,471.9 644.0,469.6" fill="#333"/>
<polygon points="644.0,474.6 676.0,480.4 644.0,477.5" fill="#333"/>
<polygon points="644.0,480.9 677.5,484.9 644.0,485.0" fill="#333"/>
<polygon points="644.0,488.9 655.3,489.5 644.0,492.4" fill="#333"/>
<polygon points="644.0,496.8 672.0,500.0 644.0,500.2" fill="#333"/>
<polygon points="644.0,503.8 676.8,510.8 644.0,507.4" fill="#333"/>
<polygon points="644.0,511.5 688.0,517.1 644.0,514.4" fill="#333"/>
<polygon points="644.0,517.2 661.0,521.7 644.0,521.1" fill="#333"/>
<polygon points="644.0,522.6 688.6,535.8 644.0,526.8" fill="#333"/>
<polygon points="644.0,527.6 675.9,536.2 644.0,531.0" fill="#333"/>
<polygon points="644.0,532.8 677.3,537.6 644.0,536.3" fill="#333"/>
<polygon points="644.0,540.7 675.0,547.6 644.0,543.3" fill="#333"/>
<polygon points="644.0,546.3 663.4,547.2 644.0,549.5" fill="#333"/>
<polygon points="644.0,552.2 688.5,558.1 644.0,554.8" fill="#333"/>
<polygon points="644.0,559.9 661.6,561.6 644.0,563.1" fill="#333"/>
<polygon points="644.0,565.1 663.8,569.4 644.0,568.1" fill="#333"/>
<polygon points="644.0,572.5 657.2,575.8 644.0,575.3" fill="#333"/>
<polygon points="644.0,579.2 667.8,582.2 644.0,583.0" fill="#333"/>
<polygon points="644.0,584.5 687.5,595.9 644.0,587.3" fill="#333"/>
<polygon points="644.0,592.2 681.4,599.6 644.0,596.2" fill="#333"/>
<polygon points="644.0,599.3 671.3,602.6 644.0,603.1" fill="#333"/>
<polygon points="644.0,604.8 682.9,613.7 644.0,608.3" fill="#333"/>
<polygon points="644.0,613.0 770.0,551.0 774.0,551.0 890.0,609.0 890.0,613.0" fill="#333"/>
<line x1="644.0" y1="612.0" x2="772.0" y2="560.0" stroke="#666666" stroke-width="1"/>
<line x1="644.0" y1="605.0" x2="772.0" y2="575.0" stroke="#666666" stroke-width="1"/>
<line x1="700.0" y1="613.0" x2="772.0" y2="551.0" stroke="#666666" stroke-width="1"/>
<line x1="772.0" y1="613.0" x2="700.0" y2="575.0" stroke="#666666" stroke-width="1"/>
<line x1="772.0" y1="613.0" x2="735.0" y2="590.0" stroke="#666666" stroke-width="1"/>
<line x1="774.0" y1="551.0" x2="890.0" y2="609.0" stroke="#666666" stroke-width="1"/>
<line x1="774.0" y1="565.0" x2="890.0" y2="612.0" stroke="#666666" stroke-width="1"/>
<line x1="772.0" y1="613.0" x2="850.0" y2="585.0" stroke="#666666" stroke-width="1"/>
<line x1="772.0" y1="613.0" x2="820.0" y2="590.0" stroke="#666666" stroke-width="1"/>
<line x1="700.0" y1="580.0" x2="772.0" y2="613.0" stroke="#666666" stroke-width="1"/>
<line x1="644.0" y1="600.0" x2="760.0" y2="613.0" stroke="#666666" stroke-width="1"/>
<line x1="644.0" y1="613.5" x2="890.0" y2="613.5" stroke="#666" stroke-width="1.5"/>
<polygon points="774.0,345.0 814.0,417.0 840.0,421.0 900.0,434.0 851.0,478.0 900.0,481.0 862.0,498.0 890.0,510.0 890.0,609.0 774.0,551.0" fill="#666666"/>
<polygon points="836.0,422.0 898.0,345.0 903.0,348.0 852.0,422.0" fill="#666666"/>
<polygon points="858.0,426.0 900.0,390.0 903.0,394.0 874.0,426.0" fill="#666666"/>
<line x1="776.0" y1="350.0" x2="812.0" y2="417.0" stroke="#3d3d3d" stroke-width="1"/>
<line x1="776.0" y1="354.0" x2="815.0" y2="417.0" stroke="#3d3d3d" stroke-width="1"/>
<line x1="776.0" y1="358.0" x2="818.0" y2="417.0" stroke="#3d3d3d" stroke-width="1"/>
<line x1="776.0" y1="362.0" x2="821.0" y2="417.0" stroke="#3d3d3d" stroke-width="1"/>
<rect x="810" y="423" width="5" height="2" fill="#3a3a3a"/>
<rect x="816" y="426" width="8" height="2" fill="#3a3a3a"/>
<rect x="822" y="423" width="11" height="2" fill="#3a3a3a"/>
<rect x="828" y="426" width="5" height="2" fill="#3a3a3a"/>
<rect x="834" y="423" width="8" height="2" fill="#3a3a3a"/>
<line x1="852.0" y1="478.0" x2="903.0" y2="466.0" stroke="#666" stroke-width="1"/>
<line x1="862.0" y1="498.0" x2="903.0" y2="484.0" stroke="#666" stroke-width="1"/>
<line x1="905.0" y1="345.0" x2="1031.0" y2="478.0" stroke="#666666" stroke-width="1"/>
<line x1="905.0" y1="391.0" x2="1031.0" y2="478.0" stroke="#666666" stroke-width="1"/>
<line x1="905.0" y1="434.0" x2="1031.0" y2="478.0" stroke="#666666" stroke-width="1"/>
<line x1="905.0" y1="481.0" x2="1031.0" y2="480.0" stroke="#666" stroke-width="1.2"/>
<line x1="880.0" y1="350.0" x2="905.0" y2="345.0" stroke="#666666" stroke-width="1"/>
<line x1="880.0" y1="400.0" x2="905.0" y2="391.0" stroke="#666666" stroke-width="1"/>
<line x1="875.0" y1="440.0" x2="905.0" y2="434.0" stroke="#666666" stroke-width="1"/>
<line x1="905.0" y1="391.0" x2="1000.0" y2="506.0" stroke="#666666" stroke-width="1"/>
<line x1="905.0" y1="434.0" x2="945.0" y2="506.0" stroke="#666666" stroke-width="1"/>
<line x1="960.0" y1="506.0" x2="1031.0" y2="478.0" stroke="#666666" stroke-width="1"/>
<line x1="1000.0" y1="506.0" x2="1031.0" y2="478.0" stroke="#666666" stroke-width="1"/>
<line x1="985.0" y1="506.0" x2="1031.0" y2="478.0" stroke="#666666" stroke-width="1"/>
<polygon points="1035.0,345.0 1161.0,347.0 1161.0,614.0 1035.0,614.0 1035.0,478.0 1076.0,433.0 1035.0,351.0" fill="#666666"/>
<polygon points="1035.0,351.0 1076.0,433.0 1035.0,476.0" fill="#333"/>
<line x1="1047.0" y1="349.0" x2="1160.0" y2="356.0" stroke="#3c3c3c" stroke-width="1.3"/>
<line x1="1040.0" y1="352.0" x2="1078.0" y2="433.0" stroke="#4a4a4a" stroke-width="1"/>
<line x1="1049.0" y1="351.0" x2="1160.0" y2="359.0" stroke="#3c3c3c" stroke-width="1.3"/>
<line x1="1041.0" y1="355.0" x2="1077.0" y2="433.0" stroke="#4a4a4a" stroke-width="1"/>
<line x1="1051.0" y1="353.0" x2="1160.0" y2="362.0" stroke="#3c3c3c" stroke-width="1.3"/>
<line x1="1042.0" y1="358.0" x2="1076.0" y2="433.0" stroke="#4a4a4a" stroke-width="1"/>
<line x1="1053.0" y1="355.0" x2="1160.0" y2="365.0" stroke="#3c3c3c" stroke-width="1.3"/>
<line x1="1043.0" y1="361.0" x2="1075.0" y2="433.0" stroke="#4a4a4a" stroke-width="1"/>
<line x1="1055.0" y1="357.0" x2="1160.0" y2="368.0" stroke="#3c3c3c" stroke-width="1.3"/>
<line x1="1044.0" y1="364.0" x2="1074.0" y2="433.0" stroke="#4a4a4a" stroke-width="1"/>
<line x1="1057.0" y1="359.0" x2="1160.0" y2="371.0" stroke="#3c3c3c" stroke-width="1.3"/>
<line x1="1045.0" y1="367.0" x2="1073.0" y2="433.0" stroke="#4a4a4a" stroke-width="1"/>
<line x1="1059.0" y1="361.0" x2="1160.0" y2="374.0" stroke="#3c3c3c" stroke-width="1.3"/>
<line x1="1046.0" y1="370.0" x2="1072.0" y2="433.0" stroke="#4a4a4a" stroke-width="1"/>
<rect x="1143" y="472" width="4" height="2" fill="#383838"/>
<rect x="1150" y="478" width="4" height="2" fill="#383838"/>
<rect x="1105" y="441" width="4" height="3" fill="#383838"/>
<rect x="1159" y="464" width="3" height="2" fill="#383838"/>
<rect x="1138" y="481" width="4" height="2" fill="#383838"/>
<rect x="1130" y="438" width="2" height="2" fill="#383838"/>
<rect x="1140" y="442" width="4" height="3" fill="#383838"/>
<rect x="1115" y="443" width="3" height="2" fill="#383838"/>
<rect x="1144" y="452" width="4" height="3" fill="#383838"/>
<rect x="1130" y="464" width="3" height="3" fill="#383838"/>
<rect x="1147" y="480" width="4" height="2" fill="#383838"/>
<rect x="1105" y="448" width="3" height="3" fill="#383838"/>
<rect x="1138" y="447" width="3" height="2" fill="#383838"/>
<rect x="1106" y="453" width="3" height="3" fill="#383838"/>
<rect x="1143" y="457" width="3" height="3" fill="#383838"/>
<rect x="1133" y="459" width="2" height="3" fill="#383838"/>
<rect x="1150" y="504" width="3" height="3" fill="#383838"/>
<rect x="1157" y="443" width="2" height="2" fill="#383838"/>
<rect x="1146" y="456" width="3" height="2" fill="#383838"/>
<rect x="1137" y="481" width="3" height="2" fill="#383838"/>
<rect x="1143" y="454" width="3" height="3" fill="#383838"/>
<rect x="1102" y="438" width="3" height="3" fill="#383838"/>
<rect x="1125" y="464" width="2" height="3" fill="#383838"/>
<rect x="1151" y="446" width="2" height="2" fill="#383838"/>
<rect x="1155" y="458" width="3" height="2" fill="#383838"/>
<rect x="1136" y="463" width="3" height="3" fill="#383838"/>
<rect x="1152" y="457" width="2" height="3" fill="#383838"/>
<rect x="1139" y="448" width="3" height="3" fill="#383838"/>
<rect x="1131" y="451" width="3" height="3" fill="#383838"/>
<rect x="1154" y="493" width="4" height="3" fill="#383838"/>
<rect x="1156" y="502" width="4" height="2" fill="#383838"/>
<rect x="1144" y="441" width="4" height="3" fill="#383838"/>
<rect x="1139" y="457" width="2" height="2" fill="#383838"/>
<rect x="1117" y="455" width="4" height="3" fill="#383838"/>
<rect x="1125" y="454" width="3" height="3" fill="#383838"/>
<rect x="1150" y="475" width="3" height="3" fill="#383838"/>
<rect x="1161" y="469" width="2" height="2" fill="#383838"/>
<rect x="1115" y="450" width="4" height="2" fill="#383838"/>
<rect x="1119" y="463" width="4" height="2" fill="#383838"/>
<rect x="1154" y="489" width="3" height="3" fill="#383838"/>
<rect x="1125" y="474" width="3" height="3" fill="#383838"/>
<rect x="1121" y="442" width="3" height="3" fill="#383838"/>
<rect x="1113" y="456" width="2" height="3" fill="#383838"/>
<rect x="1124" y="468" width="3" height="2" fill="#383838"/>
<rect x="1147" y="493" width="4" height="3" fill="#383838"/>
<rect x="1157" y="494" width="3" height="3" fill="#383838"/>
<rect x="1115" y="445" width="2" height="2" fill="#383838"/>
<rect x="1132" y="484" width="4" height="3" fill="#383838"/>
<rect x="1100" y="447" width="4" height="2" fill="#383838"/>
<rect x="1139" y="459" width="2" height="3" fill="#383838"/>
<rect x="1132" y="468" width="2" height="2" fill="#383838"/>
<rect x="1136" y="464" width="2" height="2" fill="#383838"/>
<rect x="1129" y="454" width="2" height="2" fill="#383838"/>
<rect x="1159" y="486" width="3" height="2" fill="#383838"/>
<rect x="1141" y="467" width="3" height="2" fill="#383838"/>
<rect x="1114" y="440" width="3" height="3" fill="#383838"/>
<rect x="1122" y="465" width="2" height="3" fill="#383838"/>
<rect x="1145" y="472" width="2" height="3" fill="#383838"/>
<rect x="1159" y="459" width="2" height="2" fill="#383838"/>
<rect x="1128" y="456" width="3" height="2" fill="#383838"/>
<rect x="1158" y="472" width="2" height="2" fill="#383838"/>
<rect x="1156" y="442" width="2" height="2" fill="#383838"/>
<rect x="1143" y="459" width="2" height="2" fill="#383838"/>
<rect x="1157" y="460" width="2" height="3" fill="#383838"/>
<rect x="1123" y="463" width="3" height="3" fill="#383838"/>
<rect x="1110" y="438" width="3" height="2" fill="#383838"/>
<rect x="1113" y="462" width="3" height="3" fill="#383838"/>
<rect x="1127" y="460" width="4" height="3" fill="#383838"/>
<rect x="1150" y="490" width="2" height="3" fill="#383838"/>
<rect x="1102" y="442" width="2" height="3" fill="#383838"/>
<rect x="1112" y="442" width="4" height="3" fill="#383838"/>
<rect x="1122" y="461" width="4" height="2" fill="#383838"/>
<rect x="1119" y="457" width="2" height="2" fill="#383838"/>
<rect x="1158" y="464" width="3" height="3" fill="#383838"/>
<rect x="1150" y="447" width="3" height="2" fill="#383838"/>
<line x1="1035.0" y1="479.0" x2="1161.0" y2="490.0" stroke="#3d3d3d" stroke-width="1.2"/>
<line x1="1035.0" y1="479.0" x2="1161.0" y2="493.0" stroke="#3d3d3d" stroke-width="1.2"/>
<line x1="1035.0" y1="479.0" x2="1161.0" y2="496.0" stroke="#3d3d3d" stroke-width="1.2"/>
<line x1="1035.0" y1="479.0" x2="1161.0" y2="499.0" stroke="#3d3d3d" stroke-width="1.2"/>
<line x1="1035.0" y1="479.0" x2="1161.0" y2="502.0" stroke="#3d3d3d" stroke-width="1.2"/>
<line x1="1035.0" y1="479.0" x2="1161.0" y2="505.0" stroke="#3d3d3d" stroke-width="1.2"/>
<line x1="1035.0" y1="479.0" x2="1161.0" y2="508.0" stroke="#3d3d3d" stroke-width="1.2"/>
<line x1="1035.0" y1="479.0" x2="1161.0" y2="511.0" stroke="#3d3d3d" stroke-width="1.2"/>
<polygon points="1166.0,346.0 1221.0,362.0 1258.0,356.0 1292.0,345.0 1292.0,614.0 1166.0,614.0" fill="#666666"/>
<line x1="1166.0" y1="346.0" x2="1221.0" y2="362.0" stroke="#333" stroke-width="1"/>
<rect x="1171" y="381" width="3" height="2" fill="#333"/>
<rect x="1228" y="377" width="5" height="2" fill="#333"/>
<rect x="1187" y="379" width="3" height="2" fill="#333"/>
<rect x="1195" y="378" width="2" height="2" fill="#333"/>
<rect x="1206" y="370" width="2" height="2" fill="#333"/>
<rect x="1187" y="363" width="2" height="2" fill="#333"/>
<rect x="1204" y="373" width="2" height="2" fill="#333"/>
<rect x="1239" y="380" width="2" height="2" fill="#333"/>
<rect x="1189" y="364" width="2" height="2" fill="#333"/>
<rect x="1199" y="382" width="3" height="2" fill="#333"/>
<rect x="1182" y="365" width="3" height="2" fill="#333"/>
<rect x="1213" y="375" width="5" height="2" fill="#333"/>
<rect x="1208" y="377" width="2" height="2" fill="#333"/>
<rect x="1225" y="368" width="3" height="2" fill="#333"/>
<rect x="1210" y="369" width="5" height="2" fill="#333"/>
<rect x="1188" y="371" width="2" height="2" fill="#333"/>
<line x1="1166.0" y1="350.0" x2="1140.0" y2="380.0" stroke="#555" stroke-width="1"/>
<line x1="1166.0" y1="352.0" x2="1188.0" y2="381.0" stroke="#555" stroke-width="1"/>
<polygon points="1296.0,345.0 1422.0,345.0 1422.0,614.0 1296.0,614.0" fill="#666666"/>
<polygon points="1427.0,345.0 1553.0,345.0 1553.0,614.0 1427.0,614.0" fill="#666666"/>
<polygon points="1436.0,348.0 1552.0,348.0 1530.0,405.0 1500.0,395.0" fill="#4a4a4a"/>
<line x1="1440.0" y1="349.0" x2="1553.0" y2="349.0" stroke="#606060" stroke-width="1"/>
<line x1="1448.0" y1="353.5" x2="1553.0" y2="351.0" stroke="#606060" stroke-width="1"/>
<line x1="1456.0" y1="358.0" x2="1553.0" y2="353.0" stroke="#606060" stroke-width="1"/>
<line x1="1464.0" y1="362.5" x2="1553.0" y2="355.0" stroke="#606060" stroke-width="1"/>
<line x1="1472.0" y1="367.0" x2="1553.0" y2="357.0" stroke="#606060" stroke-width="1"/>
<line x1="1480.0" y1="371.5" x2="1553.0" y2="359.0" stroke="#606060" stroke-width="1"/>
<line x1="1488.0" y1="376.0" x2="1553.0" y2="361.0" stroke="#606060" stroke-width="1"/>
<line x1="1496.0" y1="380.5" x2="1553.0" y2="363.0" stroke="#606060" stroke-width="1"/>
<line x1="1504.0" y1="385.0" x2="1553.0" y2="365.0" stroke="#606060" stroke-width="1"/>
<line x1="1512.0" y1="389.5" x2="1553.0" y2="367.0" stroke="#606060" stroke-width="1"/>
<rect x="1513" y="416" width="3" height="2" fill="#3a3a3a"/>
<rect x="1517" y="442" width="3" height="2" fill="#3a3a3a"/>
<rect x="1527" y="424" width="2" height="2" fill="#3a3a3a"/>
<rect x="1535" y="504" width="2" height="2" fill="#3a3a3a"/>
<rect x="1500" y="493" width="3" height="2" fill="#3a3a3a"/>
<rect x="1545" y="496" width="2" height="2" fill="#3a3a3a"/>
<rect x="1546" y="424" width="2" height="2" fill="#3a3a3a"/>
<rect x="1510" y="502" width="3" height="2" fill="#3a3a3a"/>
<rect x="1549" y="439" width="3" height="2" fill="#3a3a3a"/>
<rect x="1524" y="427" width="2" height="2" fill="#3a3a3a"/>
<rect x="1506" y="463" width="4" height="2" fill="#3a3a3a"/>
<rect x="1512" y="439" width="3" height="2" fill="#3a3a3a"/>
<rect x="1502" y="505" width="2" height="2" fill="#3a3a3a"/>
<rect x="1532" y="468" width="3" height="2" fill="#3a3a3a"/>
<rect x="1543" y="486" width="6" height="2" fill="#3a3a3a"/>
<rect x="1536" y="419" width="4" height="2" fill="#3a3a3a"/>
<rect x="1504" y="403" width="6" height="2" fill="#3a3a3a"/>
<rect x="1529" y="407" width="2" height="2" fill="#3a3a3a"/>
<rect x="1542" y="470" width="3" height="2" fill="#3a3a3a"/>
<rect x="1534" y="410" width="3" height="2" fill="#3a3a3a"/>
<rect x="1521" y="428" width="4" height="2" fill="#3a3a3a"/>
<rect x="1535" y="444" width="2" height="2" fill="#3a3a3a"/>
<rect x="1517" y="459" width="4" height="2" fill="#3a3a3a"/>
<rect x="1522" y="402" width="4" height="2" fill="#3a3a3a"/>
<rect x="1534" y="441" width="6" height="2" fill="#3a3a3a"/>
<rect x="1511" y="401" width="3" height="2" fill="#3a3a3a"/>
<rect x="1522" y="486" width="6" height="2" fill="#3a3a3a"/>
<rect x="1531" y="438" width="3" height="2" fill="#3a3a3a"/>
<rect x="1507" y="405" width="3" height="2" fill="#3a3a3a"/>
<rect x="1534" y="496" width="2" height="2" fill="#3a3a3a"/>
<rect x="1530" y="497" width="3" height="2" fill="#3a3a3a"/>
<rect x="1508" y="430" width="3" height="2" fill="#3a3a3a"/>
<rect x="1549" y="411" width="6" height="2" fill="#3a3a3a"/>
<rect x="1540" y="483" width="3" height="2" fill="#3a3a3a"/>
<rect x="1516" y="488" width="2" height="2" fill="#3a3a3a"/>
<rect x="1552" y="451" width="2" height="2" fill="#3a3a3a"/>
<rect x="1532" y="467" width="2" height="2" fill="#3a3a3a"/>
<rect x="1548" y="465" width="3" height="2" fill="#3a3a3a"/>
<rect x="1534" y="490" width="6" height="2" fill="#3a3a3a"/>
<rect x="1533" y="421" width="6" height="2" fill="#3a3a3a"/>
<polygon points="1557.0,345.0 1601.0,417.0 1616.0,499.0 1637.0,541.0 1682.0,601.0 1682.0,614.0 1557.0,614.0" fill="#666666"/>
<line x1="1557.0" y1="345.0" x2="1683.0" y2="440.0" stroke="#666" stroke-width="1.1"/>
<line x1="1557.0" y1="345.0" x2="1683.0" y2="530.0" stroke="#666" stroke-width="1.1"/>
<line x1="1557.0" y1="345.0" x2="1683.0" y2="601.0" stroke="#666" stroke-width="1.1"/>
<line x1="1557.0" y1="352.0" x2="1683.0" y2="440.0" stroke="#666" stroke-width="1.1"/>
<line x1="1557.0" y1="352.0" x2="1683.0" y2="530.0" stroke="#666" stroke-width="1.1"/>
<line x1="1557.0" y1="352.0" x2="1683.0" y2="601.0" stroke="#666" stroke-width="1.1"/>
<line x1="1575.0" y1="375.0" x2="1683.0" y2="410.0" stroke="#666" stroke-width="1.1"/>
<line x1="1575.0" y1="375.0" x2="1683.0" y2="500.0" stroke="#666" stroke-width="1.1"/>
<line x1="1575.0" y1="375.0" x2="1683.0" y2="576.0" stroke="#666" stroke-width="1.1"/>
<line x1="1590.0" y1="400.0" x2="1683.0" y2="410.0" stroke="#666" stroke-width="1.1"/>
<line x1="1590.0" y1="400.0" x2="1683.0" y2="500.0" stroke="#666" stroke-width="1.1"/>
<line x1="1590.0" y1="400.0" x2="1683.0" y2="576.0" stroke="#666" stroke-width="1.1"/>
<line x1="1601.0" y1="417.0" x2="1683.0" y2="345.0" stroke="#666" stroke-width="1.1"/>
<line x1="1601.0" y1="417.0" x2="1683.0" y2="380.0" stroke="#666" stroke-width="1.1"/>
<line x1="1601.0" y1="417.0" x2="1683.0" y2="410.0" stroke="#666" stroke-width="1.1"/>
<line x1="1601.0" y1="417.0" x2="1683.0" y2="440.0" stroke="#666" stroke-width="1.1"/>
<line x1="1601.0" y1="417.0" x2="1683.0" y2="470.0" stroke="#666" stroke-width="1.1"/>
<line x1="1601.0" y1="417.0" x2="1683.0" y2="500.0" stroke="#666" stroke-width="1.1"/>
<line x1="1601.0" y1="417.0" x2="1683.0" y2="530.0" stroke="#666" stroke-width="1.1"/>
<line x1="1601.0" y1="417.0" x2="1683.0" y2="555.0" stroke="#666" stroke-width="1.1"/>
<line x1="1601.0" y1="417.0" x2="1683.0" y2="576.0" stroke="#666" stroke-width="1.1"/>
<line x1="1601.0" y1="417.0" x2="1683.0" y2="590.0" stroke="#666" stroke-width="1.1"/>
<line x1="1601.0" y1="417.0" x2="1683.0" y2="601.0" stroke="#666" stroke-width="1.1"/>
<line x1="1608.0" y1="458.0" x2="1683.0" y2="345.0" stroke="#666" stroke-width="1.1"/>
<line x1="1608.0" y1="458.0" x2="1683.0" y2="380.0" stroke="#666" stroke-width="1.1"/>
<line x1="1608.0" y1="458.0" x2="1683.0" y2="410.0" stroke="#666" stroke-width="1.1"/>
<line x1="1608.0" y1="458.0" x2="1683.0" y2="440.0" stroke="#666" stroke-width="1.1"/>
<line x1="1608.0" y1="458.0" x2="1683.0" y2="470.0" stroke="#666" stroke-width="1.1"/>
<line x1="1608.0" y1="458.0" x2="1683.0" y2="500.0" stroke="#666" stroke-width="1.1"/>
<line x1="1608.0" y1="458.0" x2="1683.0" y2="530.0" stroke="#666" stroke-width="1.1"/>
<line x1="1608.0" y1="458.0" x2="1683.0" y2="555.0" stroke="#666" stroke-width="1.1"/>
<line x1="1608.0" y1="458.0" x2="1683.0" y2="576.0" stroke="#666" stroke-width="1.1"/>
<line x1="1608.0" y1="458.0" x2="1683.0" y2="590.0" stroke="#666" stroke-width="1.1"/>
<line x1="1608.0" y1="458.0" x2="1683.0" y2="601.0" stroke="#666" stroke-width="1.1"/>
<line x1="1616.0" y1="499.0" x2="1683.0" y2="380.0" stroke="#666" stroke-width="1.1"/>
<line x1="1616.0" y1="499.0" x2="1683.0" y2="410.0" stroke="#666" stroke-width="1.1"/>
<line x1="1616.0" y1="499.0" x2="1683.0" y2="440.0" stroke="#666" stroke-width="1.1"/>
<line x1="1616.0" y1="499.0" x2="1683.0" y2="470.0" stroke="#666" stroke-width="1.1"/>
<line x1="1616.0" y1="499.0" x2="1683.0" y2="500.0" stroke="#666" stroke-width="1.1"/>
<line x1="1616.0" y1="499.0" x2="1683.0" y2="530.0" stroke="#666" stroke-width="1.1"/>
<line x1="1616.0" y1="499.0" x2="1683.0" y2="555.0" stroke="#666" stroke-width="1.1"/>
<line x1="1616.0" y1="499.0" x2="1683.0" y2="576.0" stroke="#666" stroke-width="1.1"/>
<line x1="1616.0" y1="499.0" x2="1683.0" y2="590.0" stroke="#666" stroke-width="1.1"/>
<line x1="1616.0" y1="499.0" x2="1683.0" y2="601.0" stroke="#666" stroke-width="1.1"/>
<line x1="1626.0" y1="520.0" x2="1683.0" y2="380.0" stroke="#666" stroke-width="1.1"/>
<line x1="1626.0" y1="520.0" x2="1683.0" y2="410.0" stroke="#666" stroke-width="1.1"/>
<line x1="1626.0" y1="520.0" x2="1683.0" y2="440.0" stroke="#666" stroke-width="1.1"/>
<line x1="1626.0" y1="520.0" x2="1683.0" y2="470.0" stroke="#666" stroke-width="1.1"/>
<line x1="1626.0" y1="520.0" x2="1683.0" y2="500.0" stroke="#666" stroke-width="1.1"/>
<line x1="1626.0" y1="520.0" x2="1683.0" y2="530.0" stroke="#666" stroke-width="1.1"/>
<line x1="1626.0" y1="520.0" x2="1683.0" y2="555.0" stroke="#666" stroke-width="1.1"/>
<line x1="1626.0" y1="520.0" x2="1683.0" y2="576.0" stroke="#666" stroke-width="1.1"/>
<line x1="1626.0" y1="520.0" x2="1683.0" y2="590.0" stroke="#666" stroke-width="1.1"/>
<line x1="1626.0" y1="520.0" x2="1683.0" y2="601.0" stroke="#666" stroke-width="1.1"/>
<line x1="1637.0" y1="541.0" x2="1683.0" y2="410.0" stroke="#666" stroke-width="1.1"/>
<line x1="1637.0" y1="541.0" x2="1683.0" y2="440.0" stroke="#666" stroke-width="1.1"/>
<line x1="1637.0" y1="541.0" x2="1683.0" y2="470.0" stroke="#666" stroke-width="1.1"/>
<line x1="1637.0" y1="541.0" x2="1683.0" y2="500.0" stroke="#666" stroke-width="1.1"/>
<line x1="1637.0" y1="541.0" x2="1683.0" y2="530.0" stroke="#666" stroke-width="1.1"/>
<line x1="1637.0" y1="541.0" x2="1683.0" y2="555.0" stroke="#666" stroke-width="1.1"/>
<line x1="1637.0" y1="541.0" x2="1683.0" y2="576.0" stroke="#666" stroke-width="1.1"/>
<line x1="1637.0" y1="541.0" x2="1683.0" y2="590.0" stroke="#666" stroke-width="1.1"/>
<line x1="1637.0" y1="541.0" x2="1683.0" y2="601.0" stroke="#666" stroke-width="1.1"/>
<line x1="1660.0" y1="571.0" x2="1683.0" y2="440.0" stroke="#666" stroke-width="1.1"/>
<line x1="1660.0" y1="571.0" x2="1683.0" y2="470.0" stroke="#666" stroke-width="1.1"/>
<line x1="1660.0" y1="571.0" x2="1683.0" y2="500.0" stroke="#666" stroke-width="1.1"/>
<line x1="1660.0" y1="571.0" x2="1683.0" y2="530.0" stroke="#666" stroke-width="1.1"/>
<line x1="1660.0" y1="571.0" x2="1683.0" y2="555.0" stroke="#666" stroke-width="1.1"/>
<line x1="1660.0" y1="571.0" x2="1683.0" y2="576.0" stroke="#666" stroke-width="1.1"/>
<line x1="1660.0" y1="571.0" x2="1683.0" y2="590.0" stroke="#666" stroke-width="1.1"/>
<line x1="1660.0" y1="571.0" x2="1683.0" y2="601.0" stroke="#666" stroke-width="1.1"/>
<line x1="1682.0" y1="601.0" x2="1683.0" y2="470.0" stroke="#666" stroke-width="1.1"/>
<line x1="1682.0" y1="601.0" x2="1683.0" y2="500.0" stroke="#666" stroke-width="1.1"/>
<line x1="1682.0" y1="601.0" x2="1683.0" y2="530.0" stroke="#666" stroke-width="1.1"/>
<line x1="1682.0" y1="601.0" x2="1683.0" y2="555.0" stroke="#666" stroke-width="1.1"/>
<line x1="1682.0" y1="601.0" x2="1683.0" y2="576.0" stroke="#666" stroke-width="1.1"/>
<line x1="1682.0" y1="601.0" x2="1683.0" y2="590.0" stroke="#666" stroke-width="1.1"/>
<line x1="1682.0" y1="601.0" x2="1683.0" y2="601.0" stroke="#666" stroke-width="1.1"/>
<rect x="1563" y="462" width="2" height="2" fill="#3a3a3a"/>
<rect x="1571" y="478" width="2" height="2" fill="#3a3a3a"/>
<rect x="1570" y="457" width="2" height="2" fill="#3a3a3a"/>
<rect x="1566" y="490" width="2" height="2" fill="#3a3a3a"/>
<rect x="1588" y="452" width="2" height="2" fill="#3a3a3a"/>
<rect x="1577" y="492" width="2" height="2" fill="#3a3a3a"/>
<rect x="1558" y="496" width="2" height="2" fill="#3a3a3a"/>
<rect x="1561" y="483" width="2" height="2" fill="#3a3a3a"/>
<rect x="1576" y="484" width="2" height="2" fill="#3a3a3a"/>
<rect x="1568" y="473" width="2" height="2" fill="#3a3a3a"/>
<rect x="1577" y="473" width="2" height="2" fill="#3a3a3a"/>
<rect x="1580" y="475" width="2" height="2" fill="#3a3a3a"/>
<rect x="1572" y="451" width="2" height="2" fill="#3a3a3a"/>
<rect x="1579" y="477" width="2" height="2" fill="#3a3a3a"/>
<rect x="1565" y="492" width="2" height="2" fill="#3a3a3a"/>
<rect x="1584" y="475" width="2" height="2" fill="#3a3a3a"/>
<rect x="1563" y="476" width="2" height="2" fill="#3a3a3a"/>
<rect x="1561" y="457" width="2" height="2" fill="#3a3a3a"/>
<rect x="1572" y="455" width="2" height="2" fill="#3a3a3a"/>
<rect x="1572" y="478" width="2" height="2" fill="#3a3a3a"/>
<rect x="1558" y="485" width="2" height="2" fill="#3a3a3a"/>
<rect x="1560" y="490" width="2" height="2" fill="#3a3a3a"/>
<rect x="1584" y="478" width="2" height="2" fill="#3a3a3a"/>
<rect x="1559" y="478" width="2" height="2" fill="#3a3a3a"/>
<rect x="1570" y="502" width="2" height="2" fill="#3a3a3a"/>
<rect x="1562" y="497" width="2" height="2" fill="#3a3a3a"/>
<rect x="1592" y="490" width="2" height="2" fill="#3a3a3a"/>
<rect x="1586" y="461" width="2" height="2" fill="#3a3a3a"/>
<rect x="1591" y="477" width="2" height="2" fill="#3a3a3a"/>
<rect x="1590" y="500" width="2" height="2" fill="#3a3a3a"/>
<rect x="1563" y="493" width="2" height="2" fill="#3a3a3a"/>
<rect x="1590" y="454" width="2" height="2" fill="#3a3a3a"/>
<rect x="1569" y="492" width="2" height="2" fill="#3a3a3a"/>
<rect x="1563" y="499" width="2" height="2" fill="#3a3a3a"/>
<rect x="1567" y="495" width="2" height="2" fill="#3a3a3a"/>
<rect x="1562" y="478" width="2" height="2" fill="#3a3a3a"/>
<rect x="1589" y="461" width="2" height="2" fill="#3a3a3a"/>
<rect x="1566" y="478" width="2" height="2" fill="#3a3a3a"/>
<rect x="1568" y="452" width="2" height="2" fill="#3a3a3a"/>
<rect x="1563" y="459" width="2" height="2" fill="#3a3a3a"/>
<line x1="1688.0" y1="345.0" x2="1704.0" y2="420.0" stroke="#666" stroke-width="1.1"/>
<line x1="1688.0" y1="380.0" x2="1704.0" y2="345.0" stroke="#666" stroke-width="1.1"/>
<line x1="1688.0" y1="380.0" x2="1704.0" y2="420.0" stroke="#666" stroke-width="1.1"/>
<line x1="1688.0" y1="380.0" x2="1704.0" y2="500.0" stroke="#666" stroke-width="1.1"/>
<line x1="1688.0" y1="410.0" x2="1704.0" y2="345.0" stroke="#666" stroke-width="1.1"/>
<line x1="1688.0" y1="410.0" x2="1704.0" y2="420.0" stroke="#666" stroke-width="1.1"/>
<line x1="1688.0" y1="410.0" x2="1704.0" y2="500.0" stroke="#666" stroke-width="1.1"/>
<line x1="1688.0" y1="440.0" x2="1704.0" y2="345.0" stroke="#666" stroke-width="1.1"/>
<line x1="1688.0" y1="440.0" x2="1704.0" y2="420.0" stroke="#666" stroke-width="1.1"/>
<line x1="1688.0" y1="440.0" x2="1704.0" y2="500.0" stroke="#666" stroke-width="1.1"/>
<line x1="1688.0" y1="440.0" x2="1704.0" y2="560.0" stroke="#666" stroke-width="1.1"/>
<line x1="1688.0" y1="470.0" x2="1704.0" y2="345.0" stroke="#666" stroke-width="1.1"/>
<line x1="1688.0" y1="470.0" x2="1704.0" y2="420.0" stroke="#666" stroke-width="1.1"/>
<line x1="1688.0" y1="470.0" x2="1704.0" y2="500.0" stroke="#666" stroke-width="1.1"/>
<line x1="1688.0" y1="470.0" x2="1704.0" y2="560.0" stroke="#666" stroke-width="1.1"/>
<line x1="1688.0" y1="470.0" x2="1704.0" y2="610.0" stroke="#666" stroke-width="1.1"/>
<line x1="1688.0" y1="500.0" x2="1704.0" y2="420.0" stroke="#666" stroke-width="1.1"/>
<line x1="1688.0" y1="500.0" x2="1704.0" y2="500.0" stroke="#666" stroke-width="1.1"/>
<line x1="1688.0" y1="500.0" x2="1704.0" y2="560.0" stroke="#666" stroke-width="1.1"/>
<line x1="1688.0" y1="500.0" x2="1704.0" y2="610.0" stroke="#666" stroke-width="1.1"/>
<line x1="1688.0" y1="530.0" x2="1704.0" y2="420.0" stroke="#666" stroke-width="1.1"/>
<line x1="1688.0" y1="530.0" x2="1704.0" y2="500.0" stroke="#666" stroke-width="1.1"/>
<line x1="1688.0" y1="530.0" x2="1704.0" y2="560.0" stroke="#666" stroke-width="1.1"/>
<line x1="1688.0" y1="530.0" x2="1704.0" y2="610.0" stroke="#666" stroke-width="1.1"/>
<line x1="1688.0" y1="555.0" x2="1704.0" y2="420.0" stroke="#666" stroke-width="1.1"/>
<line x1="1688.0" y1="555.0" x2="1704.0" y2="500.0" stroke="#666" stroke-width="1.1"/>
<line x1="1688.0" y1="555.0" x2="1704.0" y2="560.0" stroke="#666" stroke-width="1.1"/>
<line x1="1688.0" y1="555.0" x2="1704.0" y2="610.0" stroke="#666" stroke-width="1.1"/>
<line x1="1688.0" y1="576.0" x2="1704.0" y2="500.0" stroke="#666" stroke-width="1.1"/>
<line x1="1688.0" y1="576.0" x2="1704.0" y2="560.0" stroke="#666" stroke-width="1.1"/>
<line x1="1688.0" y1="576.0" x2="1704.0" y2="610.0" stroke="#666" stroke-width="1.1"/>
<line x1="1688.0" y1="590.0" x2="1704.0" y2="500.0" stroke="#666" stroke-width="1.1"/>
<line x1="1688.0" y1="590.0" x2="1704.0" y2="560.0" stroke="#666" stroke-width="1.1"/>
<line x1="1688.0" y1="590.0" x2="1704.0" y2="610.0" stroke="#666" stroke-width="1.1"/>
<line x1="1688.0" y1="601.0" x2="1704.0" y2="500.0" stroke="#666" stroke-width="1.1"/>
<line x1="1688.0" y1="601.0" x2="1704.0" y2="560.0" stroke="#666" stroke-width="1.1"/>
<line x1="1688.0" y1="601.0" x2="1704.0" y2="610.0" stroke="#666" stroke-width="1.1"/>
<polygon points="1641.0,606.0 1704.0,606.0 1704.0,624.0 1641.0,624.0" fill="#2e2e2e"/>
<rect x="117.0" y="333" width="5" height="292" fill="#008000"/>
<rect x="247.5" y="333" width="5" height="292" fill="#33ff55"/>
<rect x="378.5" y="333" width="5" height="268" fill="#4a9ef8"/>
<rect x="508.5" y="333" width="5" height="292" fill="#ff5566"/>
<rect x="639.0" y="333" width="5" height="292" fill="#ff0000"/>
<rect x="769.5" y="333" width="5" height="292" fill="#bbee00"/>
<rect x="900.0" y="333" width="5" height="292" fill="#ff9999"/>
<rect x="1030.5" y="333" width="5" height="292" fill="#cc6600"/>
<rect x="1161.0" y="333" width="5" height="292" fill="#9a70ff"/>
<rect x="1291.5" y="333" width="5" height="292" fill="#bb33ff"/>
<rect x="1422.0" y="333" width="5" height="292" fill="#ee3399"/>
<rect x="1552.5" y="333" width="5" height="292" fill="#ccaaee"/>
<rect x="1683.0" y="333" width="5" height="292" fill="#ffbb33"/>
<polyline points="119.5,549 250.0,613 380.5,611 511.0,498 641.5,440 772.0,508 902.5,569 1033.0,478 1163.5,476 1294.0,424 1424.5,507 1555.0,560 1685.5,601 1704,598" fill="none" stroke="#00e5ff" stroke-width="1.2" shape-rendering="auto"/>
<polyline points="119.5,549 250.0,613 380.5,611 511.0,498 641.5,475 772.0,508 902.5,569 1033.0,478 1163.5,514 1294.0,349 1424.5,415 1555.0,516 1685.5,601 1704,598" fill="none" stroke="#00e5ff" stroke-width="1.2" shape-rendering="auto"/>
<polyline points="119.5,601 250.0,613 380.5,611 511.0,498 641.5,440 772.0,508 902.5,569 1033.0,478 1163.5,476 1294.0,424 1424.5,507 1555.0,560 1685.5,601 1704,598" fill="none" stroke="#00e5ff" stroke-width="1.2" shape-rendering="auto"/>
<polyline points="119.5,549 250.0,595 380.5,611 511.0,498 641.5,475 772.0,508 902.5,613 1033.0,345 1163.5,445 1294.0,545 1424.5,583 1555.0,428 1685.5,576 1704,573" fill="none" stroke="#00e5ff" stroke-width="1.2" shape-rendering="auto"/>
<line x1="1641.0" y1="527.0" x2="1683.0" y2="574.0" stroke="#00e5ff" stroke-width="1.2"/>
<line x1="1641.0" y1="573.0" x2="1683.0" y2="600.0" stroke="#00e5ff" stroke-width="1.2"/>
<rect x="369.5" y="604.5" width="18" height="15" fill="none" stroke="#dd2222" stroke-width="1.2"/>
<circle cx="380" cy="611" r="5.5" fill="#000" stroke="#6aa8ff" stroke-width="1.6" shape-rendering="auto"/>
<polygon points="378.0,303.0 419.0,247.0 468.0,297.0 411.5,336.0 399.0,336.0 441.0,297.0 419.0,275.0 378.0,314.5" fill="#4a9ef8" shape-rendering="auto"/>
<text x="129.0" y="332" transform="rotate(-45 129.0 332)" font-family="Liberation Sans" font-size="19" letter-spacing="0.3" fill="#008000" shape-rendering="auto">Time</text>
<text x="259.5" y="332" transform="rotate(-45 259.5 332)" font-family="Liberation Sans" font-size="19" letter-spacing="0.3" fill="#33ff55" shape-rendering="auto">Time Spent</text>
<text x="390.0" y="332" transform="rotate(-45 390.0 332)" font-family="Liberation Sans" font-size="19" letter-spacing="0.3" fill="#4a9ef8" shape-rendering="auto">Src IP</text>
<text x="520.5" y="332" transform="rotate(-45 520.5 332)" font-family="Liberation Sans" font-size="19" letter-spacing="0.3" fill="#ff5566" shape-rendering="auto">Result Code</text>
<text x="651.0" y="332" transform="rotate(-45 651.0 332)" font-family="Liberation Sans" font-size="19" letter-spacing="0.3" fill="#ff0000" shape-rendering="auto">HTTP Status</text>
<text x="781.5" y="332" transform="rotate(-45 781.5 332)" font-family="Liberation Sans" font-size="19" letter-spacing="0.3" fill="#bbee00" shape-rendering="auto">Total bytes</text>
<text x="912.0" y="332" transform="rotate(-45 912.0 332)" font-family="Liberation Sans" font-size="19" letter-spacing="0.3" fill="#ff9999" shape-rendering="auto">HTTP Method</text>
<text x="1042.5" y="332" transform="rotate(-45 1042.5 332)" font-family="Liberation Sans" font-size="19" letter-spacing="0.3" fill="#cc6600" shape-rendering="auto">Protocol</text>
<text x="1173.0" y="332" transform="rotate(-45 1173.0 332)" font-family="Liberation Sans" font-size="19" letter-spacing="0.3" fill="#9a70ff" shape-rendering="auto">Subdomain</text>
<text x="1303.5" y="332" transform="rotate(-45 1303.5 332)" font-family="Liberation Sans" font-size="19" letter-spacing="0.3" fill="#bb33ff" shape-rendering="auto">Host</text>
<text x="1434.0" y="332" transform="rotate(-45 1434.0 332)" font-family="Liberation Sans" font-size="19" letter-spacing="0.3" fill="#ee3399" shape-rendering="auto">Domain</text>
<text x="1564.5" y="332" transform="rotate(-45 1564.5 332)" font-family="Liberation Sans" font-size="19" letter-spacing="0.3" fill="#ccaaee" shape-rendering="auto">TLD</text>
<text x="1695.0" y="332" transform="rotate(-45 1695.0 332)" font-family="Liberation Sans" font-size="19" letter-spacing="0.3" fill="#ffbb33" shape-rendering="auto">Port</text>
</svg>
<div class="a" style="left:0;top:0;width:60px;height:58px;background:#e4e2d6"></div>
<div class="a" style="left:23px;top:17px;width:14px;height:25px;background:linear-gradient(#ff0000,#ffff00 25%,#00ff00 50%,#00ffff 65%,#0000ff 85%,#000080);border:2px solid #000"></div>
<div class="a" style="left:1101px;top:3px;width:525px;height:41px;background:#e4e2d6"></div>
<div class="t" style="left:1222px;top:13px;font-size:19px;font-weight:bold;color:#3a3a3a;letter-spacing:1.5px"><span style="color:#dd2222">4</span> / 10,000,019 Rows <span style="color:#dd6622">(    0 %)</span> 17 Axes</div>
</div>
<!-- scrollbar 1 -->
<div class="a" style="left:74px;top:636px;width:1630px;height:31px;background:#ffffff"></div>
<div class="a" style="left:74px;top:636px;width:30px;height:31px;background:#f4f4f4;border-right:2px solid #a879d9"></div>
<div class="a" style="left:104px;top:651px;width:1570px;height:1px;background:#c792d9"></div>
<div class="a" style="left:542px;top:646px;width:1000px;height:11px;background:#666"></div>
<div class="a" style="left:1673px;top:636px;width:31px;height:31px;background:#f4f4f4;border-left:2px solid #a879d9"></div>
<svg class="a" style="left:80px;top:643px" width="18" height="18"><path d="M11 4 L6 9 L11 14" stroke="#777" stroke-width="2" fill="none"/></svg>
<svg class="a" style="left:1680px;top:643px" width="18" height="18"><path d="M7 4 L12 9 L7 14" stroke="#777" stroke-width="2" fill="none"/></svg>

<!-- splitter dots -->
<div class="a" style="left:879px;top:670px;width:12px;height:2px;background:repeating-linear-gradient(90deg,#9a9894 0 2px,transparent 2px 5px)"></div>
<!-- listing dock -->
<div class="a purple" style="left:74px;top:676px;width:1630px;height:30px"></div>
<div class="t" style="left:80px;top:681px;font-size:19px;font-weight:bold;letter-spacing:1.3px">Listing [1 (default/default)]</div>
<div class="a" style="left:74px;top:706px;width:1630px;height:306px;background:#fff;border-left:1px solid #9966cc;border-right:1px solid #9966cc;border-bottom:1px solid #9966cc"></div>
<div class="a" style="left:75px;top:706px;width:1628px;height:26px;background:linear-gradient(#efedeb,#dedbd8);border-bottom:2px solid #aba8a5"></div>
<div class="a" style="left:75px;top:732px;width:100px;height:180px;background:#e0e0e0"></div>
<div class="a" style="left:176px;top:732px;width:1527px;height:180px;background:#00d7ff"></div>
<div class="a" style="left:174px;top:708px;width:2px;height:24px;background:#c9c6c3"></div>
<div class="a" style="left:175px;top:706px;width:150px;height:26px;overflow:hidden"><div class="t" style="left:5px;top:5px;font-size:18px;letter-spacing:0.5px;">Time</div></div>
<div class="a" style="left:324px;top:708px;width:2px;height:24px;background:#c9c6c3"></div>
<div class="a" style="left:325px;top:706px;width:150px;height:26px;overflow:hidden"><div class="t" style="left:5px;top:5px;font-size:18px;letter-spacing:0.5px;">Time Spent</div></div>
<div class="a" style="left:474px;top:708px;width:2px;height:24px;background:#c9c6c3"></div>
<div class="a" style="left:475px;top:706px;width:150px;height:26px;overflow:hidden"><div class="t" style="left:5px;top:5px;font-size:18px;letter-spacing:0.5px;font-style:italic;">Src IP</div></div>
<div class="a" style="left:624px;top:708px;width:2px;height:24px;background:#c9c6c3"></div>
<div class="a" style="left:625px;top:706px;width:150px;height:26px;overflow:hidden"><div class="t" style="left:5px;top:5px;font-size:18px;letter-spacing:0.5px;">Result Code</div></div>
<div class="a" style="left:774px;top:708px;width:2px;height:24px;background:#c9c6c3"></div>
<div class="a" style="left:775px;top:706px;width:150px;height:26px;overflow:hidden"><div class="t" style="left:5px;top:5px;font-size:18px;letter-spacing:0.5px;">HTTP Status</div></div>
<div class="a" style="left:924px;top:708px;width:2px;height:24px;background:#c9c6c3"></div>
<div class="a" style="left:925px;top:706px;width:150px;height:26px;overflow:hidden"><div class="t" style="left:5px;top:5px;font-size:18px;letter-spacing:0.5px;">Total bytes</div></div>
<div class="a" style="left:1074px;top:708px;width:2px;height:24px;background:#c9c6c3"></div>
<div class="a" style="left:1075px;top:706px;width:150px;height:26px;overflow:hidden"><div class="t" style="left:5px;top:5px;font-size:18px;letter-spacing:0.5px;">HTTP Method</div></div>
<div class="a" style="left:1224px;top:708px;width:2px;height:24px;background:#c9c6c3"></div>
<div class="a" style="left:1225px;top:706px;width:150px;height:26px;overflow:hidden"><div class="t" style="left:5px;top:5px;font-size:18px;letter-spacing:0.5px;">Protocol</div></div>
<div class="a" style="left:1374px;top:708px;width:2px;height:24px;background:#c9c6c3"></div>
<div class="a" style="left:1375px;top:706px;width:150px;height:26px;overflow:hidden"><div class="t" style="left:5px;top:5px;font-size:18px;letter-spacing:0.5px;">Subdomain</div></div>
<div class="a" style="left:1524px;top:708px;width:2px;height:24px;background:#c9c6c3"></div>
<div class="a" style="left:1525px;top:706px;width:150px;height:26px;overflow:hidden"><div class="t" style="left:5px;top:5px;font-size:18px;letter-spacing:0.5px;">Host</div></div>
<div class="a" style="left:1674px;top:708px;width:2px;height:24px;background:#c9c6c3"></div>
<div class="a" style="left:1675px;top:706px;width:28px;height:26px;overflow:hidden"><div class="t" style="left:5px;top:5px;font-size:18px;letter-spacing:0.5px;">Domain</div></div>
<div class="a" style="left:175px;top:776px;width:1528px;height:2px;background:#a8a8a8"></div>
<div class="a" style="left:175px;top:821px;width:1528px;height:2px;background:#a8a8a8"></div>
<div class="a" style="left:175px;top:866px;width:1528px;height:2px;background:#a8a8a8"></div>
<div class="a" style="left:174px;top:732px;width:2px;height:180px;background:#a0a0a0"></div>
<div class="a" style="left:324px;top:732px;width:2px;height:180px;background:#a0a0a0"></div>
<div class="a" style="left:474px;top:732px;width:2px;height:180px;background:#a0a0a0"></div>
<div class="a" style="left:624px;top:732px;width:2px;height:180px;background:#a0a0a0"></div>
<div class="a" style="left:774px;top:732px;width:2px;height:180px;background:#a0a0a0"></div>
<div class="a" style="left:924px;top:732px;width:2px;height:180px;background:#a0a0a0"></div>
<div class="a" style="left:1074px;top:732px;width:2px;height:180px;background:#a0a0a0"></div>
<div class="a" style="left:1224px;top:732px;width:2px;height:180px;background:#a0a0a0"></div>
<div class="a" style="left:1374px;top:732px;width:2px;height:180px;background:#a0a0a0"></div>
<div class="a" style="left:1524px;top:732px;width:2px;height:180px;background:#a0a0a0"></div>
<div class="a" style="left:1674px;top:732px;width:2px;height:180px;background:#a0a0a0"></div>
<div class="a" style="left:470px;top:732px;width:9px;height:180px;background:repeating-linear-gradient(135deg,#4a8fe8 0 5px,#3b3b3b 5px 10px)"></div>
<div class="a" style="left:620px;top:732px;width:9px;height:180px;background:repeating-linear-gradient(135deg,#4a8fe8 0 5px,#3b3b3b 5px 10px)"></div>
<div class="t" style="left:75px;width:88px;text-align:right;top:747px;font-size:16px;letter-spacing:0.5px">42</div>
<div class="a" style="left:175px;top:732px;width:150px;height:44px;overflow:hidden"><div class="t" style="left:5px;top:13px;font-size:18px;">1334036785.852</div></div>
<div class="a" style="left:325px;top:732px;width:150px;height:44px;overflow:hidden"><div class="t" style="left:5px;top:13px;font-size:18px;">0</div></div>
<div class="a" style="left:475px;top:732px;width:150px;height:44px;overflow:hidden"><div class="t" style="left:5px;top:13px;font-size:18px;font-style:italic;">42</div></div>
<div class="a" style="left:625px;top:732px;width:150px;height:44px;overflow:hidden"><div class="t" style="left:5px;top:13px;font-size:18px;">TCP_DENIED</div></div>
<div class="a" style="left:775px;top:732px;width:150px;height:44px;overflow:hidden"><div class="t" style="left:5px;top:13px;font-size:18px;">407</div></div>
<div class="t" style="left:1641px;width:30px;top:745px;font-size:18px">h…</div>
<div class="a" style="left:1675px;top:732px;width:28px;height:44px;overflow:hidden"><div class="t" style="left:5px;top:13px;font-size:18px;">aka</div></div>
<div class="t" style="left:75px;width:88px;text-align:right;top:792px;font-size:16px;letter-spacing:0.5px">666</div>
<div class="a" style="left:175px;top:777px;width:150px;height:44px;overflow:hidden"><div class="t" style="left:5px;top:13px;font-size:18px;">1334036795.358</div></div>
<div class="a" style="left:325px;top:777px;width:150px;height:44px;overflow:hidden"><div class="t" style="left:5px;top:13px;font-size:18px;">0</div></div>
<div class="a" style="left:475px;top:777px;width:150px;height:44px;overflow:hidden"><div class="t" style="left:5px;top:13px;font-size:18px;font-style:italic;">10.86.117.</div></div>
<div class="a" style="left:625px;top:777px;width:150px;height:44px;overflow:hidden"><div class="t" style="left:5px;top:13px;font-size:18px;">TCP_DENIED</div></div>
<div class="a" style="left:775px;top:777px;width:150px;height:44px;overflow:hidden"><div class="t" style="left:5px;top:13px;font-size:18px;">403</div></div>
<div class="t" style="left:1641px;width:30px;top:790px;font-size:18px">gl…</div>
<div class="a" style="left:1675px;top:777px;width:28px;height:44px;overflow:hidden"><div class="t" style="left:5px;top:13px;font-size:18px;">goo</div></div>
<div class="t" style="left:75px;width:88px;text-align:right;top:837px;font-size:16px;letter-spacing:0.5px">195135</div>
<div class="a" style="left:175px;top:822px;width:150px;height:44px;overflow:hidden"><div class="t" style="left:5px;top:13px;font-size:18px;">1334019797.050</div></div>
<div class="a" style="left:325px;top:822px;width:150px;height:44px;overflow:hidden"><div class="t" style="left:5px;top:13px;font-size:18px;">0</div></div>
<div class="a" style="left:475px;top:822px;width:150px;height:44px;overflow:hidden"><div class="t" style="left:5px;top:13px;font-size:18px;font-style:italic;">10.175.</div></div>
<div class="a" style="left:625px;top:822px;width:150px;height:44px;overflow:hidden"><div class="t" style="left:5px;top:13px;font-size:18px;">TCP_DENIED</div></div>
<div class="a" style="left:775px;top:822px;width:150px;height:44px;overflow:hidden"><div class="t" style="left:5px;top:13px;font-size:18px;">407</div></div>
<div class="t" style="left:1641px;width:30px;top:835px;font-size:18px">h…</div>
<div class="a" style="left:1675px;top:822px;width:28px;height:44px;overflow:hidden"><div class="t" style="left:5px;top:13px;font-size:18px;">aka</div></div>
<div class="t" style="left:75px;width:88px;text-align:right;top:882px;font-size:16px;letter-spacing:0.5px">569653</div>
<div class="a" style="left:175px;top:867px;width:150px;height:44px;overflow:hidden"><div class="t" style="left:5px;top:13px;font-size:18px;">1334036528.055</div></div>
<div class="a" style="left:325px;top:867px;width:150px;height:44px;overflow:hidden"><div class="t" style="left:5px;top:13px;font-size:18px;">2</div></div>
<div class="a" style="left:475px;top:867px;width:150px;height:44px;overflow:hidden"><div class="t" style="left:5px;top:13px;font-size:18px;font-style:italic;">.9.115.12</div></div>
<div class="a" style="left:625px;top:867px;width:150px;height:44px;overflow:hidden"><div class="t" style="left:5px;top:13px;font-size:18px;">TCP_DENIED</div></div>
<div class="a" style="left:775px;top:867px;width:150px;height:44px;overflow:hidden"><div class="t" style="left:5px;top:13px;font-size:18px;">403</div></div>
<div class="a" style="left:925px;top:867px;width:150px;height:44px;overflow:hidden"><div class="t" style="left:5px;top:13px;font-size:18px;">4404</div></div>
<div class="a" style="left:1075px;top:867px;width:150px;height:44px;overflow:hidden"><div class="t" style="left:5px;top:13px;font-size:18px;">GET</div></div>
<div class="a" style="left:1225px;top:867px;width:150px;height:44px;overflow:hidden"><div class="t" style="left:5px;top:13px;font-size:18px;">http</div></div>
<div class="a" style="left:1375px;top:867px;width:150px;height:44px;overflow:hidden"><div class="t" style="left:5px;top:13px;font-size:18px;">www</div></div>
<div class="a" style="left:1525px;top:867px;width:150px;height:44px;overflow:hidden"><div class="t" style="left:5px;top:13px;font-size:18px;">www.premiere.fr</div></div>
<div class="a" style="left:1675px;top:867px;width:28px;height:44px;overflow:hidden"><div class="t" style="left:5px;top:13px;font-size:18px;">pre</div></div>
<div class="a" style="left:75px;top:912px;width:1628px;height:33px;background:#fff"></div>
<div class="a" style="left:75px;top:912px;width:30px;height:33px;background:#f4f4f4;border-right:2px solid #a879d9"></div>
<div class="a" style="left:105px;top:924px;width:921px;height:10px;background:#666"></div>
<div class="a" style="left:1026px;top:928px;width:646px;height:1px;background:#c792d9"></div>
<div class="a" style="left:1672px;top:912px;width:31px;height:33px;background:#f4f4f4;border-left:2px solid #a879d9"></div>
<svg class="a" style="left:80px;top:920px" width="18" height="18"><path d="M11 4 L6 9 L11 14" stroke="#777" stroke-width="2" fill="none"/></svg>
<svg class="a" style="left:1679px;top:920px" width="18" height="18"><path d="M7 4 L12 9 L7 14" stroke="#777" stroke-width="2" fill="none"/></svg>
<div class="a purple" style="left:75px;top:945px;width:1628px;height:17px"></div>
<div class="t" style="left:879px;top:944px;font-size:16px;letter-spacing:1px">...</div>
<div class="a" style="left:75px;top:962px;width:1628px;height:2px;background:#a8a5a2"></div>
<div class="a" style="left:75px;top:964px;width:100px;height:43px;background:linear-gradient(#ecebe9,#dedcda);border-right:2px solid #a0a0a0"></div>
<div class="t" style="left:78px;top:966px;font-size:18px;line-height:21px;letter-spacing:0.6px">distinct
values</div>
<div class="a" style="left:176px;top:964px;width:1527px;height:43px;background:#f9d6d6"></div>
<div class="a" style="left:75px;top:1007px;width:1628px;height:1px;background:#a8a5a2"></div>
<div class="a" style="left:75px;top:1008px;width:100px;height:3px;background:#d8d6d4"></div>
<div class="a" style="left:175px;top:1008px;width:1528px;height:3px;background:#ffffff"></div>
<div class="a" style="left:174px;top:964px;width:2px;height:43px;background:#a8a8a8"></div>
<div class="a" style="left:175px;top:964px;width:150px;height:43px;overflow:hidden"><div class="t" style="left:4px;top:12px;font-size:18px">N/A</div><svg class="a" style="left:86px;top:12px" width="24" height="20" viewBox="0 0 24 20"><rect x="1.5" y="3.5" width="20" height="14" rx="1.5" fill="none" stroke="#000" stroke-width="2.2"/><rect x="5" y="8" width="14" height="3" fill="#000"/><rect x="8" y="12" width="11" height="3" fill="#000"/><rect x="5" y="12" width="2" height="3" fill="#000"/></svg><svg class="a" style="left:118px;top:10px" width="26" height="22" viewBox="0 0 26 22"><path d="M10 3 C6 3 5 6 6 11 L3 11 L8 17 L12 11 L9 11 C9 7 10 5 13 3 Z" fill="#8a8a8a" stroke="#6e6e6e" stroke-width="0.6"/><path d="M16 19 C20 19 21 16 20 11 L23 11 L18 4 L14 11 L17 11 C17 15 16 17 13 19 Z" fill="#8a8a8a" stroke="#6e6e6e" stroke-width="0.6"/></svg></div>
<div class="a" style="left:324px;top:964px;width:2px;height:43px;background:#a8a8a8"></div>
<div class="a" style="left:325px;top:964px;width:150px;height:43px;overflow:hidden"><div class="t" style="left:4px;top:12px;font-size:18px">N/A</div><svg class="a" style="left:86px;top:12px" width="24" height="20" viewBox="0 0 24 20"><rect x="1.5" y="3.5" width="20" height="14" rx="1.5" fill="none" stroke="#000" stroke-width="2.2"/><rect x="5" y="8" width="14" height="3" fill="#000"/><rect x="8" y="12" width="11" height="3" fill="#000"/><rect x="5" y="12" width="2" height="3" fill="#000"/></svg><svg class="a" style="left:118px;top:10px" width="26" height="22" viewBox="0 0 26 22"><path d="M10 3 C6 3 5 6 6 11 L3 11 L8 17 L12 11 L9 11 C9 7 10 5 13 3 Z" fill="#8a8a8a" stroke="#6e6e6e" stroke-width="0.6"/><path d="M16 19 C20 19 21 16 20 11 L23 11 L18 4 L14 11 L17 11 C17 15 16 17 13 19 Z" fill="#8a8a8a" stroke="#6e6e6e" stroke-width="0.6"/></svg></div>
<div class="a" style="left:474px;top:964px;width:2px;height:43px;background:#a8a8a8"></div>
<div class="a" style="left:475px;top:964px;width:150px;height:43px;overflow:hidden"><div class="t" style="left:4px;top:12px;font-size:18px">N/A</div><svg class="a" style="left:86px;top:12px" width="24" height="20" viewBox="0 0 24 20"><rect x="1.5" y="3.5" width="20" height="14" rx="1.5" fill="none" stroke="#000" stroke-width="2.2"/><rect x="5" y="8" width="14" height="3" fill="#000"/><rect x="8" y="12" width="11" height="3" fill="#000"/><rect x="5" y="12" width="2" height="3" fill="#000"/></svg><svg class="a" style="left:118px;top:10px" width="26" height="22" viewBox="0 0 26 22"><path d="M10 3 C6 3 5 6 6 11 L3 11 L8 17 L12 11 L9 11 C9 7 10 5 13 3 Z" fill="#8a8a8a" stroke="#6e6e6e" stroke-width="0.6"/><path d="M16 19 C20 19 21 16 20 11 L23 11 L18 4 L14 11 L17 11 C17 15 16 17 13 19 Z" fill="#8a8a8a" stroke="#6e6e6e" stroke-width="0.6"/></svg></div>
<div class="a" style="left:624px;top:964px;width:2px;height:43px;background:#a8a8a8"></div>
<div class="a" style="left:625px;top:964px;width:150px;height:43px;overflow:hidden"><div class="t" style="left:4px;top:12px;font-size:18px">N/A</div><svg class="a" style="left:86px;top:12px" width="24" height="20" viewBox="0 0 24 20"><rect x="1.5" y="3.5" width="20" height="14" rx="1.5" fill="none" stroke="#000" stroke-width="2.2"/><rect x="5" y="8" width="14" height="3" fill="#000"/><rect x="8" y="12" width="11" height="3" fill="#000"/><rect x="5" y="12" width="2" height="3" fill="#000"/></svg><svg class="a" style="left:118px;top:10px" width="26" height="22" viewBox="0 0 26 22"><path d="M10 3 C6 3 5 6 6 11 L3 11 L8 17 L12 11 L9 11 C9 7 10 5 13 3 Z" fill="#8a8a8a" stroke="#6e6e6e" stroke-width="0.6"/><path d="M16 19 C20 19 21 16 20 11 L23 11 L18 4 L14 11 L17 11 C17 15 16 17 13 19 Z" fill="#8a8a8a" stroke="#6e6e6e" stroke-width="0.6"/></svg></div>
<div class="a" style="left:774px;top:964px;width:2px;height:43px;background:#a8a8a8"></div>
<div class="a" style="left:775px;top:964px;width:150px;height:43px;overflow:hidden"><div class="t" style="left:4px;top:12px;font-size:18px">N/A</div><svg class="a" style="left:86px;top:12px" width="24" height="20" viewBox="0 0 24 20"><rect x="1.5" y="3.5" width="20" height="14" rx="1.5" fill="none" stroke="#000" stroke-width="2.2"/><rect x="5" y="8" width="14" height="3" fill="#000"/><rect x="8" y="12" width="11" height="3" fill="#000"/><rect x="5" y="12" width="2" height="3" fill="#000"/></svg><svg class="a" style="left:118px;top:10px" width="26" height="22" viewBox="0 0 26 22"><path d="M10 3 C6 3 5 6 6 11 L3 11 L8 17 L12 11 L9 11 C9 7 10 5 13 3 Z" fill="#8a8a8a" stroke="#6e6e6e" stroke-width="0.6"/><path d="M16 19 C20 19 21 16 20 11 L23 11 L18 4 L14 11 L17 11 C17 15 16 17 13 19 Z" fill="#8a8a8a" stroke="#6e6e6e" stroke-width="0.6"/></svg></div>
<div class="a" style="left:924px;top:964px;width:2px;height:43px;background:#a8a8a8"></div>
<div class="a" style="left:925px;top:964px;width:150px;height:43px;overflow:hidden"><div class="t" style="left:4px;top:12px;font-size:18px">N/A</div><svg class="a" style="left:86px;top:12px" width="24" height="20" viewBox="0 0 24 20"><rect x="1.5" y="3.5" width="20" height="14" rx="1.5" fill="none" stroke="#000" stroke-width="2.2"/><rect x="5" y="8" width="14" height="3" fill="#000"/><rect x="8" y="12" width="11" height="3" fill="#000"/><rect x="5" y="12" width="2" height="3" fill="#000"/></svg><svg class="a" style="left:118px;top:10px" width="26" height="22" viewBox="0 0 26 22"><path d="M10 3 C6 3 5 6 6 11 L3 11 L8 17 L12 11 L9 11 C9 7 10 5 13 3 Z" fill="#8a8a8a" stroke="#6e6e6e" stroke-width="0.6"/><path d="M16 19 C20 19 21 16 20 11 L23 11 L18 4 L14 11 L17 11 C17 15 16 17 13 19 Z" fill="#8a8a8a" stroke="#6e6e6e" stroke-width="0.6"/></svg></div>
<div class="a" style="left:1074px;top:964px;width:2px;height:43px;background:#a8a8a8"></div>
<div class="a" style="left:1075px;top:964px;width:150px;height:43px;overflow:hidden"><div class="t" style="left:4px;top:12px;font-size:18px">N/A</div><svg class="a" style="left:86px;top:12px" width="24" height="20" viewBox="0 0 24 20"><rect x="1.5" y="3.5" width="20" height="14" rx="1.5" fill="none" stroke="#000" stroke-width="2.2"/><rect x="5" y="8" width="14" height="3" fill="#000"/><rect x="8" y="12" width="11" height="3" fill="#000"/><rect x="5" y="12" width="2" height="3" fill="#000"/></svg><svg class="a" style="left:118px;top:10px" width="26" height="22" viewBox="0 0 26 22"><path d="M10 3 C6 3 5 6 6 11 L3 11 L8 17 L12 11 L9 11 C9 7 10 5 13 3 Z" fill="#8a8a8a" stroke="#6e6e6e" stroke-width="0.6"/><path d="M16 19 C20 19 21 16 20 11 L23 11 L18 4 L14 11 L17 11 C17 15 16 17 13 19 Z" fill="#8a8a8a" stroke="#6e6e6e" stroke-width="0.6"/></svg></div>
<div class="a" style="left:1224px;top:964px;width:2px;height:43px;background:#a8a8a8"></div>
<div class="a" style="left:1225px;top:964px;width:150px;height:43px;overflow:hidden"><div class="t" style="left:4px;top:12px;font-size:18px">N/A</div><svg class="a" style="left:86px;top:12px" width="24" height="20" viewBox="0 0 24 20"><rect x="1.5" y="3.5" width="20" height="14" rx="1.5" fill="none" stroke="#000" stroke-width="2.2"/><rect x="5" y="8" width="14" height="3" fill="#000"/><rect x="8" y="12" width="11" height="3" fill="#000"/><rect x="5" y="12" width="2" height="3" fill="#000"/></svg><svg class="a" style="left:118px;top:10px" width="26" height="22" viewBox="0 0 26 22"><path d="M10 3 C6 3 5 6 6 11 L3 11 L8 17 L12 11 L9 11 C9 7 10 5 13 3 Z" fill="#8a8a8a" stroke="#6e6e6e" stroke-width="0.6"/><path d="M16 19 C20 19 21 16 20 11 L23 11 L18 4 L14 11 L17 11 C17 15 16 17 13 19 Z" fill="#8a8a8a" stroke="#6e6e6e" stroke-width="0.6"/></svg></div>
<div class="a" style="left:1374px;top:964px;width:2px;height:43px;background:#a8a8a8"></div>
<div class="a" style="left:1375px;top:964px;width:150px;height:43px;overflow:hidden"><div class="t" style="left:4px;top:12px;font-size:18px">N/A</div><svg class="a" style="left:86px;top:12px" width="24" height="20" viewBox="0 0 24 20"><rect x="1.5" y="3.5" width="20" height="14" rx="1.5" fill="none" stroke="#000" stroke-width="2.2"/><rect x="5" y="8" width="14" height="3" fill="#000"/><rect x="8" y="12" width="11" height="3" fill="#000"/><rect x="5" y="12" width="2" height="3" fill="#000"/></svg><svg class="a" style="left:118px;top:10px" width="26" height="22" viewBox="0 0 26 22"><path d="M10 3 C6 3 5 6 6 11 L3 11 L8 17 L12 11 L9 11 C9 7 10 5 13 3 Z" fill="#8a8a8a" stroke="#6e6e6e" stroke-width="0.6"/><path d="M16 19 C20 19 21 16 20 11 L23 11 L18 4 L14 11 L17 11 C17 15 16 17 13 19 Z" fill="#8a8a8a" stroke="#6e6e6e" stroke-width="0.6"/></svg></div>
<div class="a" style="left:1524px;top:964px;width:2px;height:43px;background:#a8a8a8"></div>
<div class="a" style="left:1525px;top:964px;width:150px;height:43px;overflow:hidden"><div class="t" style="left:4px;top:12px;font-size:18px">N/A</div><svg class="a" style="left:86px;top:12px" width="24" height="20" viewBox="0 0 24 20"><rect x="1.5" y="3.5" width="20" height="14" rx="1.5" fill="none" stroke="#000" stroke-width="2.2"/><rect x="5" y="8" width="14" height="3" fill="#000"/><rect x="8" y="12" width="11" height="3" fill="#000"/><rect x="5" y="12" width="2" height="3" fill="#000"/></svg><svg class="a" style="left:118px;top:10px" width="26" height="22" viewBox="0 0 26 22"><path d="M10 3 C6 3 5 6 6 11 L3 11 L8 17 L12 11 L9 11 C9 7 10 5 13 3 Z" fill="#8a8a8a" stroke="#6e6e6e" stroke-width="0.6"/><path d="M16 19 C20 19 21 16 20 11 L23 11 L18 4 L14 11 L17 11 C17 15 16 17 13 19 Z" fill="#8a8a8a" stroke="#6e6e6e" stroke-width="0.6"/></svg></div>
<div class="a" style="left:1674px;top:964px;width:2px;height:43px;background:#a8a8a8"></div>
<div class="a" style="left:1675px;top:964px;width:28px;height:43px;overflow:hidden"><div class="t" style="left:4px;top:12px;font-size:18px">N/A</div><svg class="a" style="left:86px;top:12px" width="24" height="20" viewBox="0 0 24 20"><rect x="1.5" y="3.5" width="20" height="14" rx="1.5" fill="none" stroke="#000" stroke-width="2.2"/><rect x="5" y="8" width="14" height="3" fill="#000"/><rect x="8" y="12" width="11" height="3" fill="#000"/><rect x="5" y="12" width="2" height="3" fill="#000"/></svg><svg class="a" style="left:118px;top:10px" width="26" height="22" viewBox="0 0 26 22"><path d="M10 3 C6 3 5 6 6 11 L3 11 L8 17 L12 11 L9 11 C9 7 10 5 13 3 Z" fill="#8a8a8a" stroke="#6e6e6e" stroke-width="0.6"/><path d="M16 19 C20 19 21 16 20 11 L23 11 L18 4 L14 11 L17 11 C17 15 16 17 13 19 Z" fill="#8a8a8a" stroke="#6e6e6e" stroke-width="0.6"/></svg></div>

<!-- dialog -->
<div class="a" style="left:890px;top:506px;width:751px;height:364px;background:#d6d2cf;border:1px solid #5a5d60;border-top:none;box-shadow:0 8px 28px 6px rgba(0,0,0,0.62)"></div>
<div class="a" style="left:890px;top:506px;width:751px;height:42px;background:#31363b;border-radius:4px 4px 0 0"></div>
<svg class="a" style="left:895px;top:511px" width="32" height="32" viewBox="0 0 32 32">
  <g transform="rotate(10 16 16)"><rect x="3" y="3" width="26" height="26" rx="6" fill="#650088"/>
  <path d="M9 10 C12 8 18 8 22 9 M15.5 11 L14 20 M9 22 C12 24 18 24 22 21" stroke="#3a2a55" stroke-width="1.6" fill="none"/></g>
</svg>
<div class="t" style="left:1173px;top:518px;font-size:19px;color:#fcfcfc;letter-spacing:0.72px">Failed conversion(s)</div>
<svg class="a" style="left:1570px;top:516px" width="64" height="22" viewBox="0 0 64 22">
  <path d="M9 8 L16.5 15 L24 8" stroke="#fcfcfc" stroke-width="1.6" fill="none"/>
  <path d="M44 5 L56 17 M56 5 L44 17" stroke="#fcfcfc" stroke-width="1.6" fill="none"/>
</svg>
<!-- warning icon -->
<svg class="a" style="left:913px;top:571px" width="62" height="60" viewBox="0 0 62 60">
  <path d="M1 1 H61 V43 H29 L14 59 V43 H1 Z" fill="#fdbc4b"/>
  <path d="M1 1 H61 V20 H1 Z" fill="#fec65a" opacity="0.6"/>
  <path d="M1 42 H61 V44 H1 Z" fill="#f0a22a"/>
  <path d="M30 10 L46 36 H14 Z" fill="#f5a830" opacity="0.35"/>
  <path d="M30 9 L44 34 H16 Z" fill="none" stroke="#fff6e0" stroke-width="1.5"/>
  <path d="M30 17 V27" stroke="#fff6e0" stroke-width="2"/>
  <circle cx="30" cy="30.5" r="1.2" fill="#fff6e0"/>
</svg>
<div class="t" style="left:1008px;top:585px;font-size:19px;line-height:21px;letter-spacing:0.69px">1/17 column(s) have some values that failed to be properly
converted from text to binary during import...</div>
<!-- buttons -->
<div class="a" style="left:1349px;top:647px;width:147px;height:33px;border:1px solid #3d8ec9;border-radius:3px;background:linear-gradient(#eef1f3,#d8dde1)"></div>
<div class="t" style="left:1358px;top:654px;font-size:19px;letter-spacing:0.5px">Hide Details...</div>
<div class="a" style="left:1505px;top:645px;width:120px;height:37px;border:1px solid #aeaba8;border-radius:3px;background:linear-gradient(#f7f7f7,#e3e1df)"></div>
<svg class="a" style="left:1538px;top:655px" width="20" height="18" viewBox="0 0 20 18"><path d="M2 9 L7 14 L16 4" stroke="#222" stroke-width="1.5" fill="none"/></svg>
<div class="t" style="left:1561px;top:654px;font-size:19px;letter-spacing:0.6px">OK</div>
<!-- separator -->
<div class="a" style="left:908px;top:691px;width:717px;height:2px;background:#6e6c6a"></div>
<div class="a" style="left:908px;top:693px;width:717px;height:2px;background:#fafafa"></div>
<!-- details text -->
<div class="a" style="left:908px;top:704px;width:716px;height:150px;background:#fff;border-top:1px solid #9e9b98;border-left:1px solid #bdbab7"></div>
<div class="t" style="left:915px;top:712px;font-size:19px;line-height:21px;letter-spacing:0.72px">row #42 : Src IP (ipv4) : "42"
row #666 : Src IP (ipv4) : "10.86.117."
row #195135 : Src IP (ipv4) : "10.175."
row #569653 : Src IP (ipv4) : ".9.115.12"</div>

</body></html>
